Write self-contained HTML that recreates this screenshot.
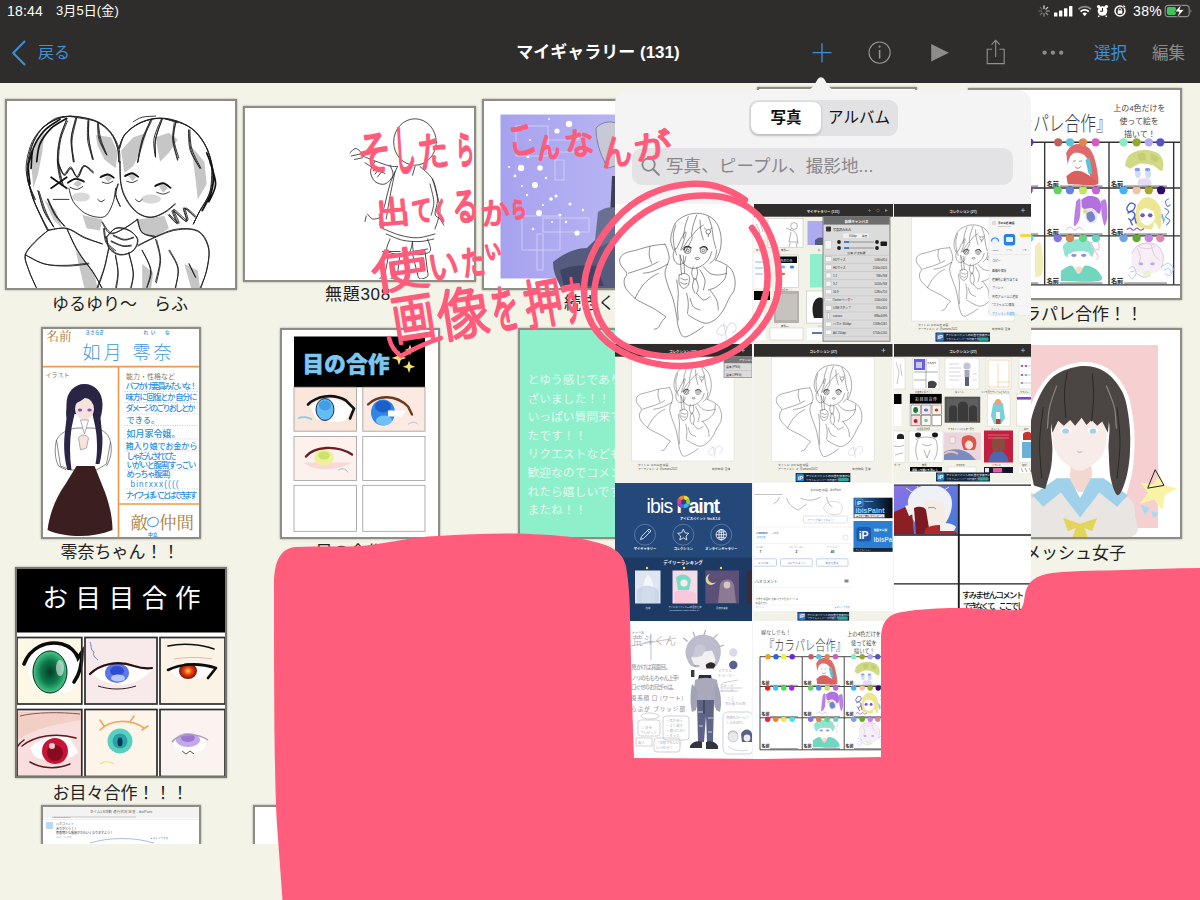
<!DOCTYPE html>
<html lang="ja">
<head>
<meta charset="utf-8">
<title>マイギャラリー</title>
<style>
*{box-sizing:border-box;margin:0;padding:0}
html,body{width:1200px;height:900px;overflow:hidden;background:#f3f3e8;font-family:"Liberation Sans","Noto Sans CJK JP",sans-serif;color:#222}
#app{position:relative;width:1200px;height:900px;overflow:hidden;background:#f3f3e8}
.abs{position:absolute}
/* top bar */
#bar{position:absolute;left:0;top:0;width:1200px;height:82.5px;background:#2e2d2c}
#bar .st{position:absolute;top:2px;color:#fff;font-size:14px;line-height:18px;letter-spacing:.2px}
#bar .nav{position:absolute;top:41px;font-size:16px;line-height:24px}
.blue{color:#3d8fd6}
.gray{color:#8b8b8b}
#title{position:absolute;left:448px;width:300px;top:41px;text-align:center;color:#fff;font-weight:bold;font-size:17px;line-height:24px}
/* thumbs */
.th{position:absolute;background:#fff;border:2px solid #8d8d86;box-shadow:0 0 2px rgba(0,0,0,.35);overflow:hidden}
.th svg{position:absolute;left:0;top:0;display:block}
.lb{position:absolute;font-size:17px;line-height:22px;color:#222;text-align:center;white-space:nowrap}
/* popover */
#pop{position:absolute;left:615px;top:90px;width:416px;height:700px;background:#f4f4f4;border-radius:13px 13px 0 0;overflow:hidden}
#arrow{position:absolute;left:803px;top:75.500px;width:36px;height:15px}
.ph{position:absolute;overflow:hidden;background:#fff}
.ph svg{position:absolute;left:0;top:0;display:block}
.hw{position:absolute;color:#ff5c7c;font-weight:bold;white-space:nowrap;transform-origin:0 50%;font-family:"Liberation Sans","Noto Sans CJK JP",sans-serif}
</style>
</head>
<body>
<div id="app">

<!-- ===== GALLERY THUMBS ===== -->
<div id="gallery">
<!--G1-->
<!-- thumb 1 : ゆるゆり -->
<div class="th" style="left:5px;top:99px;width:232px;height:191px">
<svg width="228" height="187" viewBox="7 101 228 187">
 <path d="M95.6 135.0L111.1 137.2L117.8 152.8L115.6 168.3L104.4 159.4L97.8 146.1ZM121.1 150.6L133.3 137.2L146.7 132.8L142.2 148.3L133.3 166.1L124.4 172.8ZM155.6 137.2L168.9 132.8L177.8 139.4L168.9 152.8L160.0 161.7ZM191.1 146.1L204.4 161.7L206.7 183.9L197.8 199.4L195.6 179.4ZM82.2 215.0L102.2 219.4L100.0 230.6L86.7 228.3ZM137.8 219.4L164.4 216.1L168.9 228.3L155.6 237.2L142.2 232.8ZM31.1 161.7L35.6 143.9L44.4 132.8L42.2 152.8L37.8 175.0L33.3 188.3ZM75.6 250.6L93.3 270.6L97.8 288.3L84.4 288.3ZM142.2 263.9L153.3 272.8L151.1 288.3L142.2 288.3ZM184.4 263.9L197.8 270.6L200.0 288.3L191.1 288.3ZM44.4 199.4L53.3 219.4L62.2 228.3L55.6 210.6ZM73.3 183.9L77.8 180.6L82.2 183.4L77.8 187.2ZM104.4 177.7L108.9 175.4L112.2 178.3L108.4 182.1ZM128.4 176.1L132.9 174.3L136.0 177.2L132.4 181.2ZM158.9 186.1L164.0 184.3L167.8 188.3L163.3 192.8Z" fill="#c6c6c6"/>
 <ellipse cx="81" cy="197" rx="9" ry="4.500" fill="#d9d9d9"/><ellipse cx="151" cy="199" rx="10" ry="4.500" fill="#d9d9d9"/>
 <path d="M34.4 199.4C33.3 196.1 28.9 185.7 27.8 179.4C26.7 173.1 26.9 168 27.8 161.7C28.7 155.4 30.6 147.6 33.3 141.7C36.1 135.7 39.6 130.2 44.4 126.1C49.3 122 56.3 118.7 62.2 117.2C68.1 115.7 74.1 116.5 80 117.2C85.9 118 92.6 119.1 97.8 121.7C103 124.3 107.8 128.3 111.1 132.8C114.4 137.2 116.5 143.5 117.8 148.3C119.1 153.1 118.7 159.4 118.9 161.7M27.8 179.4C28.7 182.8 30.9 192.8 33.3 199.4C35.7 206.1 39.8 214.3 42.2 219.4C44.6 224.6 46.9 228.7 47.8 230.6M37.8 190.6C38.9 193.9 41.9 204.6 44.4 210.6C47 216.5 51.9 223.5 53.3 226.1M47.8 199.4C49.1 202 52.8 210.6 55.6 215C58.3 219.4 63 224.3 64.4 226.1M66.7 119.4C65.6 122.8 61.5 132.4 60 139.4C58.5 146.5 57.4 154.3 57.8 161.7C58.1 169.1 61.5 180.2 62.2 183.9M75.6 118.3C74.8 121.9 71.5 132.2 71.1 139.4C70.7 146.7 73 158 73.3 161.7M88.9 120.6C88.9 123.7 88.1 133 88.9 139.4C89.6 145.9 92.6 156.1 93.3 159.4M97.8 123.9C98.1 126.5 98.5 134.3 100 139.4C101.5 144.6 105.6 152.4 106.7 155M57.8 161.7C58.9 163.9 62.2 173.9 64.4 175C66.7 176.1 68.9 168 71.1 168.3C73.3 168.7 75.6 177.6 77.8 177.2C80 176.9 81.9 166.9 84.4 166.1C87 165.4 91.9 171.7 93.3 172.8M68.9 188.3C69.6 190.6 70.7 197.6 73.3 201.7C75.9 205.7 80.4 210.2 84.4 212.8C88.5 215.4 94.1 216.9 97.8 217.2C101.5 217.6 104.1 217.6 106.7 215C109.3 212.4 111.9 206.1 113.3 201.7C114.8 197.2 115.2 190.6 115.6 188.3M53.3 199.4L68.9 199.4M118.9 148.3C119.8 146.1 121.3 139.1 124.4 135C127.6 130.9 132.6 126.7 137.8 123.9C143 121.1 149.6 118.9 155.6 118.3C161.5 117.8 167.4 118.9 173.3 120.6C179.3 122.2 185.9 124.4 191.1 128.3C196.3 132.2 201.1 138.3 204.4 143.9C207.8 149.4 209.8 155.7 211.1 161.7C212.4 167.6 212.6 173.9 212.2 179.4C211.9 185 210.9 189.8 208.9 195C206.9 200.2 202.6 205.7 200 210.6C197.4 215.4 194.4 221.7 193.3 223.9M151.1 119.4C149.6 122.8 144.4 132.4 142.2 139.4C140 146.5 138.5 158 137.8 161.7M162.2 119.4C161.1 122.8 156.7 133.1 155.6 139.4C154.4 145.7 155.6 154.3 155.6 157.2M175.6 121.7C175.2 124.6 173 133.1 173.3 139.4C173.7 145.7 177 156.1 177.8 159.4M188.9 130.6C189.3 133.9 189.3 144.3 191.1 150.6C193 156.9 198.5 165.4 200 168.3M168.9 215C170.4 216.5 177 224.6 177.8 223.9C178.5 223.1 171.9 210.9 173.3 210.6C174.8 210.2 184.8 222 186.7 221.7C188.5 221.3 183 209.1 184.4 208.3C185.9 207.6 193.7 215.7 195.6 217.2M120 161.7C120.2 165.4 120 177.6 121.1 183.9C122.2 190.2 123.9 194.6 126.7 199.4C129.4 204.3 133.7 209.8 137.8 212.8C141.9 215.7 146.7 217.2 151.1 217.2C155.6 217.2 160.4 215 164.4 212.8C168.5 210.6 173.7 205.4 175.6 203.9M117.8 183.9C117.4 185.7 115.2 191.3 115.6 195C115.9 198.7 119.3 204.3 120 206.1M47.8 230.6C45.7 232.4 39.3 237.6 35.6 241.7C31.9 245.7 26.7 250.2 25.6 255C24.4 259.8 27 265 28.9 270.6C30.7 276.1 35.4 285.4 36.7 288.3M47.8 230.6C50.9 230.2 60.6 227.2 66.7 228.3C72.8 229.4 78.5 234.6 84.4 237.2C90.4 239.8 99.3 242.8 102.2 243.9M66.7 228.3C68.5 232 73.3 243.1 77.8 250.6C82.2 258 89.3 266.5 93.3 272.8C97.4 279.1 100.7 285.7 102.2 288.3M25.6 255C28.7 256.5 37.6 262 44.4 263.9C51.3 265.7 59.3 266.1 66.7 266.1C74.1 266.1 85.2 264.3 88.9 263.9M102.2 221.7C103.7 223.5 107.4 231.7 111.1 232.8C114.8 233.9 120 230.6 124.4 228.3C128.9 226.1 135.6 220.9 137.8 219.4M104.4 228.3C104.8 230.6 104.8 238 106.7 241.7C108.5 245.4 114.1 249.1 115.6 250.6M106.7 237.2C108.1 235.7 111.9 229.4 115.6 228.3C119.3 227.2 125.2 228.7 128.9 230.6C132.6 232.4 137 236.1 137.8 239.4C138.5 242.8 136.3 248 133.3 250.6C130.4 253.1 124.1 255.4 120 255C115.9 254.6 111.1 251.3 108.9 248.3C106.7 245.4 107 239.1 106.7 237.2M113.3 235C115.2 235.7 121.1 239.1 124.4 239.4C127.8 239.8 131.9 237.6 133.3 237.2M111.1 241.7C113 242.4 118.9 245.4 122.2 246.1C125.6 246.9 129.6 246.1 131.1 246.1M115.6 255C115.9 258 117.8 267.2 117.8 272.8C117.8 278.3 115.9 285.7 115.6 288.3M128.9 252.8C129.6 256.1 133 266.9 133.3 272.8C133.7 278.7 131.5 285.7 131.1 288.3M108.9 248.3C108.1 251.7 106.3 261.7 104.4 268.3C102.6 275 98.9 285 97.8 288.3M137.8 246.1C140.7 244.6 149.6 239.8 155.6 237.2C161.5 234.6 167.4 231.9 173.3 230.6C179.3 229.3 186.3 228.7 191.1 229.4C195.9 230.2 199.3 231.5 202.2 235C205.2 238.5 208.1 244.6 208.9 250.6C209.6 256.5 208.1 264.3 206.7 270.6C205.2 276.9 201.1 285.4 200 288.3M137.8 219.4C138.5 221.7 139.3 229.8 142.2 232.8C145.2 235.7 153.3 236.5 155.6 237.2M142.2 250.6C143.7 253.9 150.4 264.3 151.1 270.6C151.9 276.9 147.4 285.4 146.7 288.3M155.6 239.4C156.3 242.8 160 252.4 160 259.4C160 266.5 156.3 278 155.6 281.7M168.9 250.6C170.4 253.5 176.7 262 177.8 268.3C178.9 274.6 175.9 285 175.6 288.3M188.9 263.9L195.6 277.2M68.9 181.7C70 181.1 73.1 178.5 75.6 178.3C78 178.1 82 180.2 83.3 180.6M70 187.2C71.1 187.6 74.6 189.6 76.7 189.4C78.8 189.3 81.7 187 82.7 186.6M101.1 176.1C102.2 175.7 105.7 173.8 107.8 173.9C109.8 174 112.4 176.3 113.3 176.8M102.2 182.1C103.1 182.3 106 183.6 107.8 183.4C109.6 183.3 112 181.6 112.9 181.2M125.6 175C126.7 174.6 130.2 172.6 132.2 172.8C134.3 173 136.9 175.6 137.8 176.1M126.7 181.2C127.6 181.4 130.4 182.7 132.2 182.6C134 182.4 136.5 180.7 137.3 180.3M155.6 185C156.9 184.6 160.9 182.4 163.3 182.8C165.7 183.1 168.9 186.5 170 187.2M156.7 192.3C157.8 192.6 161.2 194.2 163.3 194.1C165.4 194 168.3 192.3 169.3 191.9M97.8 199.4C98.3 199.8 100 201.6 101.1 201.7C102.2 201.7 103.9 200.2 104.4 199.9M135.6 199.4C136.1 199.8 137.8 201.7 138.9 201.7C140 201.7 141.7 199.8 142.2 199.4M133.3 121.7C134.8 120.9 138.5 118.1 142.2 117.2C145.9 116.3 153.3 116.3 155.6 116.1M165.6 119L177.8 122.8M42.2 128.3C44.4 126.7 50.7 120.4 55.6 118.3C60.4 116.3 68.5 116.5 71.1 116.1M33.7 199.7C32.6 196.2 28.6 185.2 27.4 179C26.2 172.7 25.7 168.5 26.5 162.2C27.4 156 29.4 147.4 32.4 141.4C35.4 135.4 39.6 130.2 44.5 126.2C49.5 122.1 56.2 118.8 62.1 117.3C67.9 115.7 73.7 116 79.6 116.9C85.5 117.7 92.2 119.5 97.4 122.3C102.5 125 107.2 128.9 110.6 133.2C113.9 137.5 116.1 143.1 117.4 147.9C118.8 152.6 118.4 159.5 118.7 161.9M27.8 178.4C28.7 181.8 30.8 192.1 33.2 198.9C35.6 205.7 39.7 213.8 42.1 219C44.4 224.1 46.3 228.1 47.2 229.9M38.2 191C39.1 194.3 41.2 205.1 43.8 211.1C46.4 217.1 52.2 224.4 53.8 227M48.1 198.9C49.3 201.5 52.8 210.1 55.6 214.7C58.4 219.2 63.3 224.3 64.8 226.2M67.5 121.1C66.4 124.2 62.1 132.9 60.6 139.9C59.2 147 58.2 155.7 58.7 163.2C59.1 170.7 62.4 181.3 63.2 184.9M76.5 117.8C75.6 121.2 71.7 130.9 71.3 138.2C70.9 145.5 73.8 157.8 74.3 161.7M87.9 120.8C87.8 124 86.9 134 87.7 140.5C88.5 146.9 92 156.3 92.9 159.5M98.3 122.7C98.7 125.4 99.3 133.7 100.8 139.1C102.2 144.4 105.9 152.1 106.9 154.7M57.5 160.1C58.5 162.4 61.4 172.8 63.6 173.9C65.8 175.1 68.6 166.5 70.8 166.9C73 167.4 74.6 177 76.7 176.8C78.9 176.6 81 166.6 83.8 165.8C86.6 164.9 91.8 170.7 93.4 171.7M119 148.5C119.9 146.3 121.2 139.3 124.4 135.2C127.6 131.1 133.1 126.7 138.3 123.9C143.4 121.2 149.6 119.3 155.4 118.7C161.1 118.1 166.8 118.7 172.9 120.3C178.9 122 186.4 124.6 191.7 128.4C196.9 132.2 201.2 137.7 204.4 143.3C207.6 148.9 209.7 155.8 210.9 161.8C212.1 167.9 211.8 174.2 211.5 179.6C211.2 185.1 210.9 189.3 209 194.5C207.1 199.6 202.7 205.7 200.1 210.6C197.5 215.4 194.6 221.5 193.5 223.7M150.9 119.4C149.6 122.9 145.1 133.5 142.9 140.6C140.7 147.7 138.7 158.5 137.9 162.1M162.2 118.8C161.1 122.2 156.7 132.9 155.6 139.2C154.5 145.5 155.5 153.7 155.5 156.7M176.3 120.9C175.8 123.8 173.3 131.8 173.7 138C174.1 144.2 177.9 154.7 178.8 158M188.5 129.9C188.7 133.3 188.3 143.8 190.2 150.2C192.1 156.6 198.2 165.1 199.8 168.1M169.5 214.5C171.1 215.9 178.4 223.9 179.1 223.1C179.8 222.2 172.4 209.7 173.8 209.3C175.2 208.9 185.5 220.7 187.5 220.5C189.5 220.3 184.2 208.8 185.6 208C187 207.3 194.2 214.8 195.9 216.2M35.4 199.5C34.1 196.1 28.9 185.7 27.8 179.4C26.7 173.1 27.7 167.9 28.7 161.6C29.7 155.3 31 147.7 33.7 141.8C36.4 135.9 39.9 130.4 44.9 126.2C49.8 122.1 57.5 118.4 63.3 117C69.2 115.7 74 117.1 79.9 118.1C85.8 119 93.5 120 98.8 122.6C104.1 125.2 108.2 129.4 111.6 133.6C114.9 137.9 117.5 143.4 118.9 148.2C120.3 153 119.6 160 119.8 162.4M27.8 179.3C28.7 182.5 30.8 192.2 33.3 198.9C35.7 205.6 40.1 214 42.6 219.2C45.2 224.4 47.5 228.2 48.5 230M39.1 191.4C40.2 194.7 43.3 205.1 45.7 211C48.1 216.9 52.1 224.2 53.4 226.8M47.4 199.1C48.7 201.8 52.1 210.8 54.9 215.2C57.6 219.6 62.5 223.8 64 225.5M66.2 120.5C65.1 123.7 60.8 132.6 59.4 139.7C57.9 146.7 57.1 155.2 57.4 162.7C57.7 170.3 60.7 181.2 61.3 184.9M76.7 118.2C76 121.9 72.6 133.2 72 140.5C71.5 147.8 73.2 158.3 73.5 161.9M88.4 120.6C88.5 123.6 88.2 132.4 88.8 138.8C89.5 145.2 91.7 155.6 92.3 159M97.7 123.6C97.9 126.1 97.4 133.6 98.8 138.7C100.1 143.7 104.6 151.4 105.8 154M57.6 161.7C58.7 164 61.6 173.9 63.8 175C65.9 176.2 68 168.3 70.3 168.7C72.7 169.1 75.6 177.8 77.8 177.3C80 176.9 81.1 166.6 83.6 165.9C86.1 165.3 91.4 172 92.9 173.2M119.8 148.3C120.6 146 121.8 138.7 124.9 134.6C127.9 130.6 133.1 126.7 138.3 123.9C143.5 121.2 150 119 156 118.4C161.9 117.7 167.8 118.3 173.8 120C179.7 121.7 186.6 124.5 191.7 128.4C196.8 132.3 201.1 138 204.4 143.6C207.7 149.2 210 156 211.5 162C213 167.9 213.6 173.5 213.3 179.1C213 184.6 212.1 190 209.9 195.2C207.7 200.4 203 205.5 200.2 210.3C197.4 215.1 194.5 221.8 193.3 224.1M151.8 120.4C150.3 123.7 145.2 133.2 142.8 140.2C140.4 147.2 138.4 158.8 137.5 162.5M161.7 118.2C160.4 121.5 155.2 132 154.1 138.3C153 144.6 155 153.2 155.2 156.2M174.2 122.7C174 125.7 172.2 134.3 172.7 140.5C173.3 146.7 176.7 156.9 177.5 160.2M189.8 129.7C190.1 133 190.1 142.8 191.9 149.2C193.8 155.6 199.4 164.9 200.9 168.1M168.2 215.1C169.6 216.5 176 223.9 176.7 223.1C177.3 222.4 170.6 210.7 172.2 210.4C173.8 210.1 184.3 221.6 186.2 221.2C188.1 220.8 182.1 208.6 183.5 207.9C184.9 207.1 192.7 215.3 194.6 216.8M119.9 161.6C120 165.2 119.7 177.1 120.7 183.4C121.7 189.8 123.4 194.9 126.2 199.8C128.9 204.7 133.2 209.9 137.3 212.8C141.3 215.7 145.9 217.5 150.3 217.4C154.8 217.3 160.2 214.5 164.2 212.3C168.2 210.1 172.6 205.6 174.3 204.2M118.4 184.2C118 186 115.6 191 115.9 194.7C116.2 198.4 119.6 204.3 120.3 206.3M47.7 230.7C45.6 232.5 38.7 237.4 35 241.5C31.2 245.5 26.2 250.3 25.1 255C24.1 259.7 26.9 264.4 28.7 269.8C30.5 275.1 34.7 284.3 36 287.2M47.3 230.2C50.5 229.9 60.3 227.2 66.4 228.5C72.5 229.7 78 235.1 83.9 237.7C89.9 240.2 99.1 242.8 102.2 243.8M67 229C68.8 232.7 73.2 244.1 77.7 251.4C82.1 258.8 89.6 266.9 93.8 273.2C97.9 279.6 101 286.8 102.5 289.5M25.1 254.8C28.4 256.3 37.6 262.3 44.6 264C51.6 265.8 59.8 265.4 67.1 265.3C74.4 265.1 84.9 263.5 88.4 263.1M102.1 222.6C103.5 224.4 106.6 232.6 110.2 233.6C113.8 234.6 119.1 231 123.6 228.6C128.2 226.2 135.2 220.8 137.5 219.3M103.4 228.7C103.9 231 104.3 238.8 106 242.5C107.8 246.2 112.8 249.5 114.2 250.9M106.2 237.3C107.8 235.8 112.3 229.4 116 228.2C119.8 226.9 125.3 228.1 128.8 230C132.4 231.9 136.7 236.1 137.4 239.6C138 243.1 135.5 248.6 132.7 251C129.9 253.5 124.3 254.9 120.4 254.4C116.5 254 111.6 251 109.4 248.1C107.1 245.3 107.3 239.3 106.9 237.5M113.2 235.7C114.9 236.4 120.4 239.8 123.8 240.1C127.2 240.4 131.9 238.2 133.6 237.8M111.2 240.8C113.1 241.6 119.2 245 122.6 245.7C125.9 246.4 129.8 245.1 131.3 245M115.4 255.8C115.9 258.5 118.1 267.1 118.2 272.5C118.4 277.9 116.7 285.5 116.4 288.1M128.7 253.2C129.5 256.6 132.9 267.3 133.2 273.1C133.5 279 131 285.8 130.6 288.3M108.5 248.8C107.7 252.1 106 261.9 104 268.5C102 275.2 97.9 285.2 96.7 288.6M138.4 245C141.5 243.5 150.7 238.8 156.6 236.2C162.5 233.7 167.9 230.8 173.8 229.6C179.6 228.4 187 228.2 191.8 229C196.6 229.8 199.8 231.2 202.7 234.6C205.6 238.1 208.3 243.7 209 249.4C209.7 255.2 208.1 262.8 206.8 269.2C205.5 275.6 202 284.7 201 287.8M137.1 219.2C137.9 221.4 139.1 229.7 142.1 232.6C145.1 235.4 152.9 235.6 155.1 236.2M142.1 250.1C143.5 253.4 149.7 263.5 150.5 269.7C151.3 275.9 147.5 284.2 146.9 287.2M156.7 240C157.3 243.4 160.7 253.1 160.6 260.3C160.5 267.4 157 279.2 156.3 283M169.7 250.2C171.1 253.2 177.3 261.9 178.2 268.3C179.2 274.6 175.7 285 175.2 288.3M189.2 263.8L195.4 277.2" fill="none" stroke="#1e1e1e" stroke-width=".9" stroke-linecap="round" stroke-linejoin="round"/>
 <path d="M31.1 168.3C31.5 165 31.1 154.6 33.3 148.3C35.6 142 40 135.4 44.4 130.6C48.9 125.7 57.4 121.3 60 119.4M36.7 161.7C37.2 158.7 37.6 149.4 40 143.9C42.4 138.3 46.7 132.6 51.1 128.3C55.6 124.1 64.1 120 66.7 118.3M30 183.9C29.7 180.9 28.1 171.7 28.4 166.1C28.8 160.6 31.6 153.1 32.2 150.6M206.7 152.8C207.8 156.1 212.6 166.1 213.3 172.8C214.1 179.4 213 186.5 211.1 192.8C209.3 199.1 203.7 207.6 202.2 210.6M210 161.7C210.9 165.4 215.7 177.2 215.6 183.9C215.4 190.6 210 198.7 208.9 201.7M51.1 177.2L66.7 188.3M51.1 188.3L66.7 177.2M67.8 182.8C69.1 182.1 72.9 179.2 75.6 179C78.3 178.8 82.6 181.2 84 181.7M100.4 177.2C101.7 176.8 105.6 174.5 107.8 174.6C110 174.6 112.8 177.1 113.8 177.7M124.9 176.1C126.1 175.7 130 173.3 132.2 173.4C134.4 173.6 137.2 176.2 138.2 176.8M155.1 186.1C156.5 185.7 160.7 183.1 163.3 183.4C165.9 183.7 169.4 187.1 170.7 187.9" fill="none" stroke="#111" stroke-width="1.700" stroke-linecap="round"/>
</svg>
</div>
<div class="lb" style="left:20px;top:294px;width:200px">ゆるゆり〜　らふ</div>

<!-- thumb 2 : 無題308 -->
<div class="th" style="left:242.500px;top:106px;width:233.500px;height:175.500px">
<svg width="229" height="171" viewBox="245 109 229 171">
 <g fill="none" stroke="#222" stroke-width=".8" stroke-linecap="round" stroke-linejoin="round">
  <ellipse cx="415" cy="143" rx="21.300" ry="23.200"/>
  <path d="M350 153.8C351 153 354 149.1 356.2 149.5C358.5 149.9 362.5 155.1 363.8 156.2M351.2 157L360 155M354.5 160.5L362.5 158.8M362.5 157C364.6 157.8 370.4 160.3 375 162C379.6 163.7 386.2 166.1 390 167C393.8 167.9 396.2 167.4 397.5 167.5M365 163.8C366.7 164.8 371.7 168.2 375 170C378.3 171.8 383.3 173.8 385 174.5M375 162.5C374.2 164.2 370.5 169.2 370.5 172.5C370.5 175.8 372.6 180.4 375 182.5C377.4 184.6 382 186 385 185C388 184 392.2 179.4 393 176.2C393.8 173.1 390.5 167.9 390 166.2M373 172L376.5 167.5M375 175L379 170M377.5 178L381.5 173M397.5 167.5C396.2 170.4 392.1 178.8 390 185C387.9 191.2 386.7 198.3 385 205C383.3 211.7 380.2 220.8 380 225C379.8 229.2 383.1 229.2 383.8 230M420 167.5C422.1 169.6 429.6 175 432.5 180C435.4 185 436.2 192.1 437.5 197.5C438.8 202.9 440.4 207.1 440 212.5C439.6 217.9 435.8 227.1 435 230M383.8 230C386.5 231 394.4 234.8 400 236.2C405.6 237.7 411.7 239 417.5 238.8C423.3 238.5 432.1 235.6 435 235M386.2 235C389 236 396.9 240 402.5 241.2C408.1 242.5 414.8 242.7 420 242.5C425.2 242.3 431.5 240.4 433.8 240M395 172.5C394.2 176.7 391.5 189.6 390 197.5C388.5 205.4 386.9 216.2 386.2 220M415 167.5L412.5 176.2M432.5 180C433.3 183.3 437.1 194.2 437.5 200C437.9 205.8 434.6 211.7 435 215C435.4 218.3 438.5 218.1 440 220C441.5 221.9 443.1 225.2 443.8 226.2M430 185C430.6 187.9 433.5 197.3 433.8 202.5C434 207.7 431.7 214 431.2 216.2M367.5 215C368.3 215.8 370.4 219.4 372.5 220C374.6 220.6 378.8 219 380 218.8M366.2 217L365 222.5M390 240C389.6 242.1 384.6 250 387.5 252.5C390.4 255 403.3 256.7 407.5 255C411.7 253.3 411.7 244.6 412.5 242.5M412.5 242.5C412.9 244.6 412.1 253.3 415 255C417.9 256.7 427.9 255 430 252.5C432.1 250 427.9 242.1 427.5 240M388.8 255L385 275M400 255L397.5 275M412.5 255L417.5 275M425 252.5L427.5 272.5M382.5 252.5L400 252.5M412.5 252.5L427.5 250M383.8 256.2L400 256.2M385 275C384.2 275.8 379.2 279.1 380 280C380.8 280.9 387.1 281.3 390 280.5C392.9 279.7 396.2 275.9 397.5 275M417.5 275C417.9 275.8 418.3 279.6 420 280C421.7 280.4 426.2 278.8 427.5 277.5C428.8 276.2 427.5 273.3 427.5 272.5"/>
 </g>
</svg>
</div>
<div class="lb" style="left:308px;top:284px;width:100px;letter-spacing:.7px">無題308</div>

<!-- thumb 3 : purple -->
<div class="th" style="left:482px;top:99px;width:233px;height:191px">
<svg width="229" height="187" viewBox="484 101 229 187">
 <defs><linearGradient id="pg" x1="0" x2="1" y1="0" y2="0"><stop offset="0" stop-color="#a7a2ee"/><stop offset="1" stop-color="#c2c0f6"/></linearGradient></defs>
 <rect x="500.500" y="114.500" width="196" height="164" fill="url(#pg)"/>
 <g fill="none" stroke="#d6d4fb" stroke-width=".8">
  <rect x="516" y="126" width="32" height="30"/><rect x="548" y="140" width="34" height="12"/><rect x="555" y="160" width="9" height="20"/>
  <rect x="522" y="216" width="38" height="34"/><rect x="543" y="218" width="46" height="14"/><rect x="537" y="234" width="6" height="36"/>
 </g>
 <g fill="#fff">
  <circle cx="569" cy="124" r="3.2"/><circle cx="557" cy="131" r="2.6"/><circle cx="521" cy="168" r="3.2"/><circle cx="540" cy="168" r="2.8"/><circle cx="535" cy="185" r="3"/><circle cx="539" cy="213" r="3"/><circle cx="577" cy="233" r="2.6"/><circle cx="551" cy="199" r="1.8"/><circle cx="556" cy="196" r="1.6"/><circle cx="570" cy="204" r="1.5"/><circle cx="515" cy="176" r="1.4"/><circle cx="528" cy="157" r="1.3"/><circle cx="549" cy="150" r="1.3"/><circle cx="546" cy="178" r="1.2"/><circle cx="527" cy="195" r="1.2"/><circle cx="560" cy="215" r="1.3"/><circle cx="583" cy="210" r="1.2"/><circle cx="533" cy="229" r="1.2"/><circle cx="566" cy="222" r="1.2"/><circle cx="509" cy="167" r="1.1"/><circle cx="530" cy="140" r="1.1"/><circle cx="578" cy="138" r="1.1"/><circle cx="543" cy="205" r="1.1"/><circle cx="522" cy="186" r="1"/><circle cx="552" cy="222" r="1"/><circle cx="549" cy="119" r="1"/>
 </g>
 <path d="M596 128c6-6 14-8 22-4l4 40-14 4c-6-10-12-24-12-40z" fill="#c7c9d6" stroke="#70738a" stroke-width=".8"/>
 <path d="M612 176h12v40h-14z" fill="#3c4156"/>
 <path d="M553 262c10-8 22-14 34-14 10-10 20-20 34-24v64h-60c-4-8-8-16-8-26z" fill="#555b7c"/>
 <path d="M560 270c10-4 24-6 36-4l8 20h-40z" fill="#3e4463"/>
 <path d="M598 212c6-4 12-6 20-4v30l-24 12z" fill="#6a7092"/>
</svg>
</div>
<div class="lb" style="left:564px;top:293px;width:68px;text-align:left">続きくん</div>

<!-- 4th & 5th thumbs in row 1 -->
<div class="th" style="left:757px;top:87px;width:160px;height:213px"></div>
<!-- カラパレ symbol (138x138 local) -->
<svg width="0" height="0" style="position:absolute">
<defs>
<symbol id="kara" viewBox="0 0 138 138" overflow="visible">
 <rect width="138" height="138" fill="#fff"/>
 <text x="8" y="13" font-size="5" fill="#555">線なしでも！</text>
 <text x="11" y="28.500" font-size="13.500" fill="#3a3a3a" font-weight="300" textLength="82" lengthAdjust="spacingAndGlyphs">『カラパレ合作』</text>
 <g font-size="5.200" fill="#444"><text x="94" y="15">上の4色だけを</text><text x="98" y="23.500">使って絵を</text><text x="101" y="32">描いて！</text></g>
 <g fill="none" stroke="#333" stroke-width=".9">
  <path d="M7 35.700H138M7 65.500H138M7 96.800H138M7 128.800H138M7 35.700V128.800M49.200 35.700V128.800M91.200 35.700V128.800M133.400 35.700V128.800"/>
 </g>
 <!-- characters -->
 <g opacity=".9">
  <path d="M63.2 42.6C63.8 41.8 65.1 39 66.6 38.1C68.1 37.1 70.4 36.8 72.2 36.9C74.1 37.1 76.4 37.9 77.9 39.2C79.4 40.5 80.3 42.4 81.3 44.8C82.2 47.3 83 50.8 83.5 53.9C84 56.9 84.8 62.2 84.1 62.9C83.3 63.5 79.9 60.1 79 57.8C78.1 55.5 79.2 51.7 78.4 49.3C77.7 47 76.1 44.8 74.5 43.7C72.9 42.6 70.4 42.2 68.9 42.6C67.4 43 66.2 44.6 65.5 46C64.7 47.3 64.5 49.7 64.3 50.5Z" fill="#db5a5c"/>
  <path d="M65.7 44.8C66.4 44.5 68.5 43.1 70 43C71.4 43 73.5 43.4 74.5 44.6C75.5 45.8 76.1 48.8 75.8 50.5C75.6 52.1 74 53.7 72.8 54.4C71.6 55.2 70 55.5 68.9 55C67.7 54.4 66.6 51.7 66.1 51Z" fill="#fff"/>
  <path d="M75.8 47.1L78.6 46.0L80.4 56.3L77.9 56.3Z" fill="#3fc3d2"/>
  <path d="M63.4 57.8C64.3 57.2 66.8 54.7 68.9 54.4C70.9 54.1 73.4 54.4 75.8 55.9C78.3 57.3 85.7 61.9 83.7 63.1C81.8 64.3 67.6 63.1 64.3 63.1Z" fill="#d4504f"/>
  <path d="M67.7 48.2L69.4 47.7M71.7 48.2L73.6 47.8M68.9 51.6C69.2 51.8 70.2 52.8 70.9 52.7C71.6 52.7 72.6 51.6 72.9 51.4" fill="none" stroke="#b03a3c" stroke-width=".5"/>
  <path d="M101.6 51C101.9 50 102.5 46.4 103.8 44.8C105.1 43.2 107.2 42.1 109.5 41.4C111.7 40.8 114.9 40.5 117.3 40.9C119.8 41.3 122.6 42.3 124.1 43.7C125.7 45.1 126.4 47.6 126.6 49.3C126.8 51.1 126.6 54.2 125.5 54.4C124.3 54.6 121.9 51.5 119.6 50.7C117.3 49.9 114.1 49.2 111.7 49.6C109.3 49.9 106.3 52.4 105.2 53Z" fill="#cdd578"/>
  <path d="M109.5 43.7C110.2 43.5 113 42 114 42.6C114.9 43.1 115.6 46.2 115.1 47.1C114.6 47.9 111.8 47.6 111.1 47.7ZM118.5 43.1C119.2 43.5 122.4 44.5 123 45.4C123.6 46.3 122.6 48.5 121.9 48.8C121.1 49.1 119 47.4 118.5 47.1Z" fill="#b3bf55" opacity=".6"/>
  <path d="M105.8 52.7C106.8 52.3 109.4 50.5 111.7 50.2C114 50 118 50.2 119.6 51.4C121.2 52.5 121.7 55.5 121.3 57.2C120.9 58.9 119 60.8 117.3 61.5C115.7 62.2 112.8 62.1 111.1 61.5C109.5 60.9 107.9 58.4 107.2 57.8Z" fill="#fff"/>
  <ellipse cx="109.7" cy="53.6" rx="1.8" ry="1.2" fill="#7d96e6"/>
  <ellipse cx="116.4" cy="53.6" rx="1.8" ry="1.2" fill="#7d96e6"/>
  <path d="M107.8 55C108.4 55 111.1 54.3 111.7 55C112.3 55.6 111.7 58.4 111.1 58.9C110.6 59.5 109 58.5 108.6 58.4ZM114.6 55C115.3 55 117.9 54.3 118.5 55C119 55.6 118.6 58.3 118 58.9C117.5 59.6 115.8 58.9 115.3 58.9Z" fill="#bcd2f8" opacity=".8"/>
  <path d="M110.6 59.5C111.7 59.5 116 58.8 117.3 59.5C118.7 60.2 119.8 62.8 118.5 63.4C117.2 64.1 111 63.4 109.5 63.4Z" fill="#d9c8f4" opacity=".7"/>
  <path d="M73.1 73.3C73.9 72.8 76.1 71 77.9 70.8C79.6 70.5 82.4 70.9 83.7 71.9C85.1 72.9 85.8 74.9 86 76.6C86.2 78.4 85.8 81.9 84.9 82.3C83.9 82.7 81.6 79.3 80.1 78.9C78.6 78.5 77 80.2 75.8 80C74.7 79.8 73.8 78.1 73.4 77.8Z" fill="#ab62dc"/>
  <path d="M69.8 74.2C70.2 74 72.1 71.1 72.5 73C72.8 74.9 72.7 82.6 72 85.4C71.3 88.3 68.9 90.9 68.4 90.2C67.9 89.4 68.8 82.5 68.9 80.9ZM85.8 74.2C86.3 74.1 88.4 71.9 89.2 73.6C89.9 75.3 90.2 81.5 90.1 84.3C89.9 87.1 88.9 90.3 88.3 90.2C87.7 90 86.7 84.5 86.4 83.4Z" fill="#b772e2"/>
  <path d="M75.4 79.2C76.2 79.1 78.8 78.2 80.1 78.7C81.5 79.1 83.1 80.6 83.5 82C83.9 83.5 83.6 86.4 82.6 87.5C81.7 88.5 79.1 88.9 77.9 88.4C76.7 87.8 75.8 85 75.4 84.3Z" fill="#e9e0f6"/>
  <path d="M76.5 82C77.1 81.9 79.2 80.4 80.1 80.9C81.1 81.5 82.4 84.3 82.2 85.4C82 86.6 79.9 87.7 79 87.7C78.1 87.7 77.1 85.8 76.7 85.4Z" fill="#3b57ad" opacity=".75"/>
  <path d="M75.4 78.7L76.3 80.0L77.7 80.2L76.5 81.1L76.7 82.5L75.4 81.7L74.2 82.5L74.5 81.1L73.4 80.2L74.7 80.0Z" fill="#c9e36a"/>
  <path d="M63.2 92.8C63.7 92.5 65.1 91 66 91.1C67 91.1 67.9 93.1 68.9 93.1C69.8 93.1 70.7 91.3 71.7 91.3C72.6 91.3 74 92.8 74.5 93.1" fill="none" stroke="#c8a6ea" stroke-width=".6"/>
  <path d="M109.5 76.6C110.2 75.8 112.2 72.6 114 71.9C115.7 71.2 118.1 71.6 119.8 72.6C121.6 73.5 123.4 75.4 124.3 77.5C125.3 79.7 125.5 83 125.5 85.4C125.5 87.9 125.1 92 124.3 92.4C123.6 92.8 121.9 87.9 121 87.9C120 87.9 120.6 92 118.7 92.4C116.8 92.8 111.2 91.7 109.5 90.2C107.7 88.6 108.5 84.3 108.3 83.2Z" fill="#ece488"/>
  <path d="M110.8 80.9C111.5 80.5 113.5 78.7 115.1 78.7C116.7 78.7 119.2 79.6 120.2 80.9C121.1 82.2 121.4 85.1 120.7 86.6C120.1 88.1 117.7 89.8 116.2 89.9C114.7 90.1 112.5 88.1 111.7 87.7Z" fill="#fff"/>
  <ellipse cx="113.1" cy="83.4" rx="1.5" ry="1.4" fill="#6444c6"/>
  <ellipse cx="118.1" cy="83.4" rx="1.5" ry="1.4" fill="#6444c6"/>
  <path d="M102.7 78.7C103.1 78.1 104 75.9 104.9 75.5C105.8 75.1 107.7 75.7 108.1 76.4C108.5 77.1 107.9 79 107.2 79.8C106.5 80.5 104.6 81.1 103.8 80.9C103.1 80.7 102.9 79 102.7 78.7M103.3 82C103.7 81.9 105.3 80.7 106.1 80.9C106.9 81.1 108.1 82.2 108.1 83.2C108.1 84.1 106.8 86.2 106.1 86.6C105.4 86.9 104.2 85.6 103.8 85.4M104.9 86.6L106.6 89.9M107.8 84.3L109 88.8" fill="none" stroke="#3553c4" stroke-width=".9"/>
  <path d="M130.3 72.5C129.9 72.7 128.3 73.3 128.1 74.2C127.9 75 128.6 77.2 129.2 77.5C129.8 77.9 131.1 76.6 131.4 76.4M127.5 78.7C128 79 130.2 80 130.3 80.9C130.4 81.9 128 83.4 128.1 84.3C128.2 85.2 130.8 85.6 130.9 86.6C131 87.5 129 89.4 128.6 89.9M125.8 82.6L126.9 87.7" fill="none" stroke="#5b78d8" stroke-width=".7"/>
  <path d="M125.2 84.3C125.6 84.5 127.3 84.7 127.5 85.4C127.7 86.2 126.6 88.3 126.4 88.8" fill="none" stroke="#6ad0e6" stroke-width=".7"/>
  <path d="M102.7 92.8C103.1 92.6 104.2 91.6 104.9 91.6C105.7 91.7 106.4 93.1 107.2 93.1C108 93.1 108.7 91.6 109.5 91.6C110.2 91.6 111 93 111.7 93.1C112.5 93.2 113.6 92.2 114 92" fill="none" stroke="#7a3fb8" stroke-width=".7"/>
  <path d="M61 103.7C61.5 103.1 62.7 100.9 64.3 100.1C66 99.3 68.8 99 71.1 99C73.4 99 76.4 99.1 78.1 100.1C79.8 101.1 81.1 103.1 81.5 104.8C81.8 106.6 80.9 110.1 80.1 110.5C79.4 110.8 78.1 107.1 77 107.1C75.8 107.1 74.7 110.5 73.4 110.5C72 110.5 70.4 107.1 68.9 107.1C67.4 107.1 65.5 110.1 64.3 110.5C63.2 110.8 62.5 109.5 62.1 109.3Z" fill="#86e2cb"/>
  <path d="M64.3 109.1C65.1 108.8 66.8 107.3 68.9 107.1C70.9 106.8 75.1 106.6 76.7 107.5C78.4 108.4 79.2 110.7 79 112.5C78.9 114.3 77.5 117.2 75.8 118.1C74.2 119.1 70.7 119 68.9 118.4C67 117.7 65.6 114.9 64.9 114.2Z" fill="#fff"/>
  <ellipse cx="68.3" cy="109.5" rx="1.7" ry="1.1" fill="#8b7fe0"/>
  <ellipse cx="74.7" cy="109.5" rx="1.7" ry="1.1" fill="#8b7fe0"/>
  <path d="M59.8 119.5C61 118.9 64.7 115.8 66.6 116.1C68.5 116.4 69.8 121.5 71.3 121.5C72.9 121.5 73.8 116.4 75.8 116.1C77.9 115.8 82.2 117.8 83.7 119.5C85.2 121.2 88.9 125.1 84.9 126.3C80.9 127.4 64 126.3 59.8 126.3Z" fill="#62d2ba"/>
  <path d="M79.2 101.4C79.9 101.2 82.6 99.4 83.5 100.1C84.4 100.8 85.1 105 84.6 105.7C84.2 106.5 81.6 105.3 80.7 104.6C79.8 103.9 79.5 102 79.2 101.4M81.3 105.7C81.7 106.5 84 109.1 84.2 110.2C84.4 111.4 82.7 112.1 82.4 112.5" fill="none" stroke="#f3bcd2" stroke-width=".7"/>
  <path d="M68.9 119.3C69.3 119.6 70.5 121.5 71.3 121.5C72.2 121.5 73.7 120 73.9 119.3C74.2 118.5 73.5 117.4 72.8 117C72.1 116.6 70.5 117 70 117Z" fill="#f6c9b0" opacity=".8"/>
  <path d="M106.1 108.2C106.6 107.4 107.8 104.6 109.5 103.5C111.1 102.3 113.9 101.4 116.2 101.4C118.5 101.4 121.5 102 123.2 103.5C124.9 104.9 126.2 107.8 126.6 110.2C127 112.7 126.8 116.3 125.5 118.1C124.1 120 121.1 121.1 118.5 121.5C115.8 121.9 111.6 121.5 109.5 120.4C107.4 119.3 106.4 115.7 105.8 114.8Z" fill="#f6eef6"/>
  <path d="M106.1 108.2C106.6 107.4 107.8 104.6 109.5 103.5C111.1 102.3 113.9 101.4 116.2 101.4C118.5 101.4 121.5 102 123.2 103.5C124.9 104.9 126.2 107.8 126.6 110.2C127 112.7 125.7 116.8 125.5 118.1M109.5 104.6C109.8 105.5 111.5 108.6 111.7 110.2C111.9 111.9 110.8 114 110.6 114.8M118.5 102.3C118.9 103.5 119.8 107.4 120.7 109.1C121.7 110.8 123.6 111.9 124.1 112.5" fill="none" stroke="#e6b8dc" stroke-width=".6"/>
  <ellipse cx="115.7" cy="103.5" rx="5.200" ry="1.600" fill="none" stroke="#d8c8e8" stroke-width=".6"/>
  <ellipse cx="112.0" cy="115.0" rx="1.5" ry="1.0" fill="#b9a0e6"/>
  <ellipse cx="119.6" cy="115.0" rx="1.5" ry="1.0" fill="#b9a0e6"/>
  <path d="M125.2 117C126 116.6 128.4 114.6 129.8 114.8C131.1 114.9 133 116.8 133.1 118.1C133.3 119.5 131.8 122.1 130.9 122.6C129.9 123.2 128.1 121.7 127.5 121.5M126.9 119.3C127.5 119.1 129.5 117.8 130.3 118.1C131.2 118.5 131.7 121 132 121.5M104.4 118.1C104.9 118 106.4 116.4 107.2 117C108 117.6 109.1 120.2 108.9 121.5C108.7 122.8 106.9 124.8 106.1 124.9C105.3 125 104.4 122.6 104 122.1M109.5 121.5C110.2 121.9 112.5 123.6 114 123.8C115.5 124 117.7 122.8 118.5 122.6M104.9 120.4L107.8 119.8" fill="none" stroke="#a9c0f2" stroke-width=".6"/>
  <path d="M112.8 120.4C113.6 120.3 116.4 119.4 117.3 119.8C118.3 120.3 119 122.5 118.5 123.2C117.9 123.9 114.7 123.9 114 124Z" fill="#e5f0c0" opacity=".8"/>
 </g>
 <!-- dots -->
 <g>
  <circle cx="15" cy="35.700" r="2.700" fill="#f0a020"/><circle cx="23" cy="35.700" r="2.700" fill="#2468e0"/><circle cx="30.700" cy="35.700" r="2.700" fill="#f2f040"/><circle cx="39.200" cy="35.700" r="2.700" fill="#6a24d0"/>
  <circle cx="58" cy="35.700" r="2.700" fill="#c0605e"/><circle cx="65.700" cy="35.700" r="2.700" fill="#5cc2e0"/><circle cx="74.200" cy="35.700" r="2.700" fill="#e08450"/><circle cx="82.500" cy="35.700" r="2.700" fill="#d25cc4"/>
  <circle cx="100.700" cy="35.700" r="2.700" fill="#86ecc4"/><circle cx="109.200" cy="35.700" r="2.700" fill="#96a828"/><circle cx="117.200" cy="35.700" r="2.700" fill="#b4a6f2"/><circle cx="124.700" cy="35.700" r="2.700" fill="#5256c4"/>
  <circle cx="14.700" cy="67" r="2.700" fill="#e02424"/><circle cx="22.700" cy="67" r="2.700" fill="#44c4f0"/><circle cx="30.700" cy="67" r="2.700" fill="#48e048"/><circle cx="38.700" cy="67" r="2.700" fill="#a428e0"/>
  <circle cx="57.700" cy="67" r="2.700" fill="#62d264"/><circle cx="65.700" cy="67" r="2.700" fill="#6484e2"/><circle cx="74.200" cy="67" r="2.700" fill="#c4e264"/><circle cx="82.700" cy="67" r="2.700" fill="#c264d2"/>
  <circle cx="100.700" cy="67" r="2.700" fill="#44b2f0"/><circle cx="109.200" cy="67" r="2.700" fill="#f2c4a4"/><circle cx="117.200" cy="67" r="2.700" fill="#a4aa28"/><circle cx="125.200" cy="67" r="2.700" fill="#32086a"/>
  <circle cx="14.700" cy="98.300" r="2.700" fill="#e02454"/><circle cx="22.700" cy="98.300" r="2.700" fill="#f08424"/><circle cx="30.700" cy="98.300" r="2.700" fill="#eaea44"/><circle cx="39.200" cy="98.300" r="2.700" fill="#44e4e4"/>
  <circle cx="57.700" cy="98.300" r="2.700" fill="#8474e2"/><circle cx="65.700" cy="98.300" r="2.700" fill="#d28454"/><circle cx="74.200" cy="98.300" r="2.700" fill="#64d484"/><circle cx="82.700" cy="98.300" r="2.700" fill="#64d4c4"/>
  <circle cx="100.700" cy="98.300" r="2.700" fill="#74a4e2"/><circle cx="109.200" cy="98.300" r="2.700" fill="#64aa28"/><circle cx="117.200" cy="98.300" r="2.700" fill="#c484e2"/><circle cx="124.700" cy="98.300" r="2.700" fill="#e284a4"/>
 </g>
 <g font-size="4" fill="#222" font-weight="bold">
  <text x="8.500" y="64">名前</text><text x="50.500" y="64">名前</text><text x="92.500" y="64">名前</text>
  <text x="8.500" y="95.300">名前</text><text x="50.500" y="95.300">名前</text><text x="92.500" y="95.300">名前</text>
  <text x="8.500" y="127.300">名前</text><text x="50.500" y="127.300">名前</text><text x="92.500" y="127.300">名前</text>
 </g>
 <path d="M17 64.300h28M59 64.300h28M101 64.300h28M17 95.600h28M59 95.600h28M101 95.600h28M17 127.600h28M59 127.600h28M101 127.600h28" stroke="#333" stroke-width=".5"/>
</symbol>
</defs>
</svg>

<div class="th" style="left:968px;top:88px;width:214px;height:212px">
<svg width="210" height="208" viewBox="0 0 210 208"><use href="#kara" x="-.7" y="-2.400" width="211.400" height="211.400"/><g transform="translate(-.7 -2.400) scale(1.532)"><path d="M42.9 103.5C43.5 103.1 45.5 100.1 46.3 101.2C47.1 102.3 47.8 106.9 48 110.2C48.2 113.6 48.3 119.3 47.4 121.5C46.6 123.8 43.7 123.4 42.9 123.8Z" fill="#ebe9a6" opacity=".8"/></g></svg>
</div>
<div class="lb" style="left:1000px;top:304px;width:150px">カラパレ合作！！</div>

<!-- row 2 -->
<!-- 零奈ちゃん -->
<div class="th" style="left:40.500px;top:327px;width:160px;height:212px">
<svg width="156" height="208" viewBox="42.500 329 156 208">
 <g stroke="#f2994a" stroke-width="1.700" fill="none"><path d="M42 366.700H199M118 366.700V538M118 504H199"/></g>
 <text x="46" y="341" font-size="12.500" fill="#a87a3a" font-family="'Liberation Serif','Noto Serif CJK SC',serif">名前</text>
 <text x="82" y="358.500" font-size="18" fill="#3a9ae2" font-weight="300" textLength="89" lengthAdjust="spacing">如月 零奈</text>
 <text x="85" y="334" font-size="4.600" fill="#3a9ae2" font-weight="bold">きさらぎ</text><text x="143" y="334" font-size="4.600" fill="#3a9ae2" font-weight="bold" textLength="26">れい　な</text>
 <text x="45" y="376.500" font-size="6" fill="#8f7a62">イラスト</text>
 <text x="125.500" y="378.500" font-size="7" fill="#8f7a62">能力・性格など</text>
 <g font-size="8.200" fill="#2a8fe0" font-weight="500">
  <text x="125" y="388.500" textLength="72">バフかけ要員みたいな！</text>
  <text x="125" y="400" textLength="72">味方に回復とか 自分に</text>
  <text x="125" y="411" textLength="70">ダメージのごりおしとか</text>
  <text x="126" y="422.500">できる。</text>
  <text x="126" y="436.500" font-size="9">如月家令嬢。</text>
  <text x="125" y="449" textLength="72">箱入り娘でお金から</text>
  <text x="126" y="458.500" textLength="50">しゃだんされてた</text>
  <text x="126" y="468" textLength="70">いがいと腹黒(すっごい</text>
  <text x="126" y="477" textLength="44">めっちゃ腹黒)</text>
  <text x="130" y="486.500" textLength="48">binrxxx((((</text>
  <text x="125" y="498" textLength="72">ナイフっぽいことはできます</text>
 </g>
 <g stroke="#aaa" stroke-width=".6" stroke-dasharray="1 1.400"><path d="M124 391.500h74M124 402.500h74M124 414h74M124 425.500h74M124 439h74M124 451h74M124 470h74M124 489h74M124 500h74"/></g>
 <text x="130" y="529" font-size="17.500" fill="#a8803e" font-family="'Liberation Serif','Noto Serif CJK SC',serif">敵</text>
 <text x="158.500" y="529" font-size="17.500" fill="#a8803e" font-family="'Liberation Serif','Noto Serif CJK SC',serif">仲間</text>
 <ellipse cx="152.500" cy="522" rx="5.500" ry="4.600" fill="none" stroke="#3a9ae2" stroke-width="1" transform="rotate(-20 152.500 522)"/>
 <text x="147.500" y="536" font-size="4.800" fill="#2a8fe0" font-weight="bold">中立</text>
 <!-- figure -->
 <path d="M56 440c4-8 14-12 22-12h12c10 0 18 4 20 14l-4 22-10 6H70l-10-4z" fill="#fff" stroke="#555" stroke-width=".7"/>
 <path d="M56 440c-2 8-2 18 2 26l8 4M110 442c2 8 0 18-4 24" fill="none" stroke="#555" stroke-width=".7"/>
 <path d="M76 466h18l8 20c6 14 10 30 10 44-10 4-22 6-32 6-12 0-24-2-33-6 2-16 8-32 18-46z" fill="#3b1f20"/>
 <path d="M66 404c0-12 8-20 18-20s18 8 18 20c0 6-1 10-2 14l2 20c0 10-1 18-3 26l-4 0c2-10 2-24 0-36l-3-14H74l-3 14c-2 14-2 28 0 42l-4 0c-3-10-4-22-3-34l2-18c-1-4 0-8 0-14z" fill="#2a2545"/>
 <ellipse cx="84" cy="409" rx="9.500" ry="11" fill="#f6e3dc"/>
 <path d="M72 404c2-10 8-16 14-16 6 0 10 6 10 14-4-2-6-6-8-10-2 6-8 10-16 12z" fill="#2a2545"/>
 <ellipse cx="79.500" cy="410" rx="2.200" ry="1.600" fill="#8a4fc0"/><ellipse cx="89" cy="410" rx="2.200" ry="1.600" fill="#8a4fc0"/>
 <path d="M80 420l4 14 4-14z" fill="#fff" stroke="#666" stroke-width=".5"/>
 <path d="M78 438c2-4 8-4 10 0l-2 10-6 2z" fill="#f6e3dc" stroke="#666" stroke-width=".5"/>
</svg>
</div>
<div class="lb" style="left:50px;top:542px;width:140px">零奈ちゃん！！</div>

<!-- 目の合作 -->
<div class="th" style="left:280px;top:327.500px;width:159.500px;height:211.500px">
<svg width="155.500" height="207.500" viewBox="282 329.500 155.500 207.500">
 <rect x="294" y="336" width="131" height="50.700" fill="#000"/>
 <text x="302.500" y="371" font-size="21.500" fill="#7cc6f2" font-weight="900" stroke="#7cc6f2" stroke-width=".6" stroke-linejoin="round" textLength="87">目の合作</text>
 <g fill="#f7e26a"><path d="M399 350l1.800 5.600 5.600 1.800-5.600 1.800-1.800 5.600-1.800-5.600-5.600-1.800 5.600-1.800z"/><path d="M410 344l1.400 4 4 1.400-4 1.400-1.400 4-1.400-4-4-1.400 4-1.400z"/><path d="M409 360l1.600 4.600 4.600 1.600-4.600 1.600-1.600 4.600-1.600-4.600-4.600-1.600 4.600-1.600z"/></g>
 <rect x="294" y="386.700" width="62.500" height="44" fill="#fbe6dc"/>
 <rect x="362.800" y="386.700" width="62.200" height="44" fill="#fbe9e2"/>
 <rect x="294" y="436" width="62.500" height="44" fill="#fdf1ee"/>
 <g fill="none" stroke="#9c9c9c" stroke-width=".8"><rect x="294" y="386.700" width="62.500" height="44"/><rect x="362.800" y="386.700" width="62.200" height="44"/><rect x="294" y="436" width="62.500" height="44"/><rect x="362.800" y="436" width="62.200" height="44"/><rect x="294" y="484.800" width="62.500" height="46"/><rect x="362.800" y="484.800" width="62.200" height="46"/></g>
 <!-- eye 1 -->
 <path d="M310 406c8-8 22-10 34-4l8 6-6 12c-8 2-20 2-30-2z" fill="#fff"/>
 <ellipse cx="325" cy="409" rx="9" ry="11" fill="#62bdf2"/><ellipse cx="325" cy="405" rx="6" ry="5" fill="#3f9fe6"/><ellipse cx="325" cy="409" rx="9" ry="11" fill="none" stroke="#1a2a4a" stroke-width="1"/>
 <path d="M308 404c8-8 24-12 38-4l8 8-4 10" fill="none" stroke="#111" stroke-width="2.600" stroke-linecap="round"/>
 <path d="M298 418c4-2 10-2 14 1" stroke="#7fd0e8" stroke-width="1.600" fill="none"/>
 <!-- eye 2 -->
 <ellipse cx="383" cy="412" rx="12" ry="13" fill="#2f86e6"/><ellipse cx="383" cy="406" rx="8" ry="6" fill="#1d5fc8"/><ellipse cx="384" cy="420" rx="8" ry="5" fill="#6ec0f6"/>
 <path d="M368 404c10-10 28-10 40 2l4 8" fill="none" stroke="#6a3a1e" stroke-width="2.400" stroke-linecap="round"/>
 <path d="M388 410h18l-4 6h-14z" fill="#fff"/>
 <path d="M408 424c3-3 8-3 10 0" stroke="#b8c4e8" stroke-width="1" fill="none"/>
 <!-- eye 3 -->
 <path d="M304 462c6 8 30 10 48 0" fill="#f8c8c8" opacity=".6"/>
 <ellipse cx="324" cy="457" rx="10" ry="8" fill="#edf29a"/><ellipse cx="324" cy="455" rx="6" ry="4" fill="#d0e070"/>
 <path d="M306 456c8-10 30-12 46-2" fill="none" stroke="#6a1e22" stroke-width="2.400" stroke-linecap="round"/>
 <path d="M338 470c3-3 8-2 10 2" stroke="#b8b8c8" stroke-width="1" fill="none"/>
</svg>
</div>
<div class="lb" style="left:300px;top:542px;width:120px">目の合作✨</div>

<!-- mint -->
<div class="th" style="left:518px;top:327.500px;width:160px;height:211.500px;background:#8eefcb">
<div style="position:absolute;left:7.500px;top:41.500px;font-size:11.700px;line-height:18.600px;color:rgba(255,255,255,.78);white-space:nowrap;letter-spacing:.1px">とゆう感じでありがとうご<br>ざいました！！<br>いっぱい質問来て嬉しかっ<br>たです！！<br>リクエストなども<br>歓迎なのでコメントしてく<br>れたら嬉しいです！！<br>またね！！</div>
</div>

<!-- メッシュ女子 -->
<div class="th" style="left:968px;top:327.500px;width:214px;height:211.500px">
<svg width="210" height="207.500" viewBox="970 329.500 210 207.500">
 <rect x="990" y="344.500" width="168" height="183" fill="#f6cfd1"/>
 <path d="M1030.4 492C1029.4 485.5 1024.9 466.4 1024.7 452.9C1024.4 439.4 1025 423.9 1028.9 410.9C1032.8 398 1040 383.6 1048.1 375.4C1056.3 367.2 1068.4 363.3 1078 361.9C1087.6 360.4 1097.8 362.3 1105.7 366.8C1113.7 371.3 1121 379.9 1125.6 388.9C1130.3 397.9 1132 410.1 1133.5 420.9C1134.9 431.7 1134.8 443.4 1134.2 453.6C1133.6 463.8 1132.4 474.1 1129.9 482C1127.4 490 1127.5 497.2 1119.2 501.2C1110.9 505.3 1092.8 507.1 1080.1 506.2C1067.5 505.4 1049.3 497.9 1043.2 496.3Z" fill="#fff"/>
 <path d="M1030.4 499.1C1034.7 496.7 1048.4 484 1056.7 484.9C1065 485.8 1072.3 504.4 1080.1 504.4C1088 504.4 1095.3 485.8 1103.6 484.9C1111.9 484 1124.7 494.4 1129.9 499.1C1135.1 503.9 1135.2 506.9 1134.9 513.3C1134.5 519.7 1145.2 533.5 1127.8 537.5C1110.4 541.5 1046.6 537.5 1030.4 537.5Z" fill="#e9e5e2"/>
 <path d="M1070.9 461.8C1074 461.8 1086.1 458.5 1089.4 461.8C1092.7 465 1092.3 476.3 1090.8 481.3C1089.3 486.4 1083.7 492 1080.1 492C1076.6 492 1071.2 483.1 1069.5 481.3Z" fill="#f1d9d1"/>
 <path d="M1032.5 494.8L1056.7 477.8L1069.5 477.8L1080.1 497.7L1090.8 477.8L1103.6 477.8L1127.8 494.8L1117.1 506.2L1099.3 492.0L1080.1 516.9L1060.9 492.0L1043.2 506.2Z" fill="#9fd2ea"/>
 <path d="M1063.1 517.6L1080.1 523.3L1097.2 517.6L1092.2 530.4L1084.4 527.6L1088.0 537.5L1072.3 537.5L1075.9 527.6L1068.0 530.4Z" fill="#e3d45c"/>
 <path d="M1053.8 417.3C1053.7 421.5 1052 435.4 1053.1 442.2C1054.2 449 1057 454 1060.2 458.2C1063.5 462.5 1069.4 465.9 1072.7 467.8C1075.9 469.8 1077.4 470 1079.8 470C1082.1 470 1083.6 469.8 1086.9 467.8C1090.1 465.9 1096.1 462.5 1099.3 458.2C1102.6 454 1105.4 449 1106.4 442.2C1107.5 435.4 1105.9 421.5 1105.7 417.3Z" fill="#f7ece7"/>
 <path d="M1033.9 484.9C1033.1 479.6 1029.2 464.7 1028.9 452.9C1028.7 441 1028.9 426.1 1032.5 413.8C1036 401.5 1042.7 386.9 1050.3 378.9C1057.9 371 1069.1 367.6 1078 366.1C1086.9 364.7 1096.3 366.3 1103.6 370.4C1110.9 374.5 1117.8 382.6 1122.1 391C1126.4 399.4 1127.9 410.6 1129.2 420.9C1130.5 431.2 1130.5 443.1 1129.9 452.9C1129.3 462.7 1127.7 472.6 1125.6 479.6C1123.6 486.5 1120.3 495.1 1117.8 494.8C1115.3 494.5 1112.3 485.4 1110.7 477.8C1109.2 470.2 1109.2 459.4 1108.6 449.3C1108 439.3 1111.9 424.4 1107.2 417.3C1102.4 410.2 1089.1 406.7 1080.1 406.7C1071.1 406.7 1057.7 410.2 1053.1 417.3C1048.5 424.4 1052.8 441 1052.4 449.3C1052 457.6 1052.2 460.6 1051 467.1C1049.8 473.6 1046.2 484.9 1045.3 488.4Z" fill="#4b4643"/>
 <path d="M1050.3 417.3L1056.7 388.9L1078.0 376.4L1102.9 388.9L1109.3 417.3L1107.9 432.3L1102.2 420.9L1097.2 425.2L1091.5 419.5L1086.5 424.4L1081.6 417.3L1075.2 425.2L1070.2 419.5L1063.8 425.2L1058.1 420.2L1052.4 432.3Z" fill="#4b4643"/>
 <g fill="none" stroke="#2b2725" stroke-width="1"><path d="M1067.3 371.1C1066.9 374.7 1064.7 384.7 1064.5 392.4C1064.3 400.1 1065.7 413.2 1065.9 417.3M1092.2 372.9C1092.5 376.7 1093.8 388 1093.6 396C1093.5 404 1091.9 416.7 1091.5 420.9M1043.2 406.7C1042.6 412.6 1039.8 430.4 1039.6 442.2C1039.4 454.1 1041.4 471.9 1041.7 477.8M1117.1 406.7C1117.6 412.6 1120 430.4 1120 442.2C1120 454.1 1117.6 471.9 1117.1 477.8"/></g>
 <g fill="none" stroke="#8a8480" stroke-width="1.200"><path d="M1056.7 385.3C1055.5 388.9 1051.1 399.6 1049.6 406.7C1048 413.8 1047.8 424.4 1047.4 428M1106.4 385.3C1107.7 388.9 1112.6 399.6 1114.3 406.7C1115.9 413.8 1116 424.4 1116.4 428"/></g>
 <ellipse cx="1065.6" cy="430.1" rx="5.500" ry="2.800" fill="#fff"/><ellipse cx="1092.9" cy="430.1" rx="5.500" ry="2.800" fill="#fff"/>
 <ellipse cx="1065.6" cy="430.5" rx="3.400" ry="2.600" fill="#a5d0ec"/><ellipse cx="1092.9" cy="430.5" rx="3.400" ry="2.600" fill="#a5d0ec"/>
 <path d="M1077.3 451.1q2.500 1.500 5 0" fill="none" stroke="#c88" stroke-width=".7"/>
 <path d="M1159.8 473.5L1163.3 484.9L1177.6 487.7L1164.8 494.8L1162.6 509.8L1154.1 499.1L1139.9 503.4L1147.7 492.0L1140.6 482.0L1153.4 483.5Z" fill="#f9f3a6"/>
 <path d="M1140.6 504.1L1149.8 507.6L1144.8 514.8ZM1151.2 510.5L1158.4 512.6L1154.1 518.3Z" fill="#a6dcf0"/>
 <path d="M1147.7 487.7L1155.2 469.2L1164.0 484.9Z" fill="none" stroke="#222" stroke-width="1"/>
</svg>
</div>
<div class="lb" style="left:1005px;top:543px;width:140px">メッシュ女子</div>

<!-- row 3 -->
<div class="th" style="left:15px;top:567px;width:211.500px;height:211px;border-color:#77776f">
<svg width="207.500" height="207" viewBox="17 569 207.500 207">
 <rect x="17" y="569" width="208" height="63.500" fill="#000"/>
 <text x="42.500" y="607" font-size="25.500" fill="#fff" font-weight="400" textLength="158" lengthAdjust="spacing">お目目合作</text>
 <rect x="17" y="637.500" width="64.800" height="66.500" fill="#fdf8e6"/>
 <rect x="85" y="637.500" width="72" height="66.500" fill="#f8e9ea"/>
 <rect x="160" y="637.500" width="65" height="66.500" fill="#fbf4e6"/>
 <rect x="17" y="709.500" width="64.800" height="67" fill="#f8dedd"/>
 <rect x="85" y="709.500" width="72" height="67" fill="#fdf4ea"/>
 <rect x="160" y="709.500" width="65" height="67" fill="#fbf3f0"/>
 <defs>
  <radialGradient id="ge"><stop offset="0" stop-color="#063d28"/><stop offset=".55" stop-color="#0f7a4c"/><stop offset="1" stop-color="#49c98a"/></radialGradient>
  <radialGradient id="re"><stop offset="0" stop-color="#f6d040"/><stop offset=".5" stop-color="#e83a12"/><stop offset="1" stop-color="#7a1208"/></radialGradient>
 </defs>
 <!-- c1r1 green eye -->
 <path d="M28 668c2-16 14-26 28-26 14 0 24 10 24 26 0 14-8 26-22 26-16 0-30-10-30-26z" fill="#fff"/>
 <ellipse cx="50" cy="672" rx="17" ry="21" fill="url(#ge)" stroke="#06251a" stroke-width="1"/>
 <ellipse cx="60" cy="668" rx="4" ry="8" fill="#fff" opacity=".55"/>
 <path d="M24 664c6-16 22-24 38-20 8 2 14 8 16 14l4-6c0 10-2 22-8 30" fill="none" stroke="#0a0a0a" stroke-width="3.600" stroke-linecap="round"/>
 <!-- c2r1 blue -->
 <path d="M92 674c10-8 26-12 40-8 8 2 14 4 20 4-6 6-14 12-24 14-14 2-26-2-36-10z" fill="#fff"/>
 <ellipse cx="117" cy="673" rx="12" ry="10" fill="#5a78e8"/><ellipse cx="117" cy="671" rx="7" ry="5" fill="#2f4bd0"/><ellipse cx="118" cy="678" rx="7" ry="3.600" fill="#b8c8fa"/>
 <path d="M90 674c10-10 28-14 44-8 6 2 12 3 18 2" fill="none" stroke="#2a0c10" stroke-width="2.200" stroke-linecap="round"/>
 <path d="M98 686c12 4 26 4 38 0" fill="none" stroke="#3a1c20" stroke-width="1"/>
 <path d="M90 642c2 4 0 8 4 10M94 652c-2 4 2 6 4 8" stroke="#5a78d8" stroke-width=".9" fill="none"/>
 <!-- c3r1 red -->
 <path d="M168 646c14-3 32-2 46 3" fill="none" stroke="#111" stroke-width="1.600" stroke-linecap="round"/>
 <path d="M170 670c10-4 26-6 44-2-6 8-16 12-26 12-8 0-14-4-18-10z" fill="#fff"/>
 <ellipse cx="188" cy="671" rx="9" ry="8" fill="url(#re)"/>
 <path d="M168 670c12-6 30-8 48-2l-8 10" fill="none" stroke="#0c0c0c" stroke-width="2.600" stroke-linecap="round" stroke-linejoin="round"/>
 <path d="M174 659c12-2 26-2 38 0" stroke="#d8a8a0" stroke-width=".8" fill="none"/>
 <!-- c1r2 red big -->
 <path d="M17 712c20 0 44 0 64-2v10c-24 4-46 8-64 20z" fill="#f2cfc4"/>
 <path d="M30 748c8-10 24-14 40-10l8 14c-10 10-30 12-44 4z" fill="#fff"/>
 <circle cx="55" cy="751" r="13" fill="#c81434"/><circle cx="55" cy="753" r="8" fill="#8a0a20"/><circle cx="52" cy="746" r="3" fill="#fff" opacity=".8"/>
 <path d="M22 746c12-10 34-14 54-8M24 740c-3 2-5 4-6 6M30 762c10 6 26 8 40 2" fill="none" stroke="#5a1a20" stroke-width="1.500" stroke-linecap="round"/>
 <path d="M20 716c16-4 40-4 60-2" fill="none" stroke="#7a5a58" stroke-width="1"/>
 <!-- c2r2 teal -->
 <circle cx="120" cy="741" r="12.500" fill="#58d0c0"/><circle cx="120" cy="741" r="7.500" fill="#2aa0a8"/><ellipse cx="120" cy="742" rx="2.500" ry="4.500" fill="#0c3a4a"/>
 <path d="M100 730c10-10 30-12 44-2M104 726l-4-6M130 722l4-6M142 730l6-4" fill="none" stroke="#f0a85a" stroke-width="1.600" stroke-linecap="round"/>
 <path d="M100 764c4-3 10-3 14 0" stroke="#f4d88a" stroke-width="1.200" fill="none"/>
 <!-- c3r2 pale purple -->
 <ellipse cx="190" cy="744" rx="16" ry="9" fill="#fff"/>
 <ellipse cx="188" cy="740" rx="12" ry="7" fill="#c4a8ea"/><ellipse cx="188" cy="738" rx="7" ry="4" fill="#9a78d2"/>
 <path d="M172 742c6-8 24-10 36-2" fill="none" stroke="#a89ab0" stroke-width="1.400"/>
 <path d="M182 751l4 3 4-3 4 3" stroke="#555" stroke-width="1" fill="none"/>
 <g fill="none" stroke="#2c2c2c" stroke-width="1.700"><rect x="17" y="637.500" width="64.800" height="66.500"/><rect x="85" y="637.500" width="72" height="66.500"/><rect x="160" y="637.500" width="65" height="66.500"/><rect x="17" y="709.500" width="64.800" height="67"/><rect x="85" y="709.500" width="72" height="67"/><rect x="160" y="709.500" width="65" height="67"/></g>
</svg>
</div>
<div class="lb" style="left:40.500px;top:782.500px;width:160px">お目々合作！！！</div>

<!-- row 4 (clipped at y=844) -->
<div style="position:absolute;left:0;top:800px;width:1200px;height:44px;overflow:hidden">
 <div class="th" style="left:41px;top:5px;width:159.500px;height:120px">
  <svg width="156" height="40" viewBox="43 807 156 40">
   <rect x="43" y="807" width="156" height="11" fill="#f3f3f3"/>
   <text x="121" y="813.300" font-size="3.600" fill="#666" text-anchor="middle">タイムLS活動 進行状況 狂言 - ibisPaint</text>
   <rect x="52" y="816" width="84" height="2" fill="#dedede"/><text x="53" y="817.700" font-size="1.800" fill="#777">ibispaint.com/art/1234</text>
   <path d="M43 819.500h156" stroke="#ddd" stroke-width=".5"/>
   <rect x="46" y="822" width="7" height="7" fill="#b9d9ee"/>
   <text x="56" y="825" font-size="3" fill="#555">ハオコメント</text>
   <text x="56" y="829.500" font-size="3" fill="#333">ありがとう！！</text>
   <text x="56" y="833.500" font-size="3" fill="#333">思春期かな服装がかわいくなりますよう！</text>
   <text x="56" y="838" font-size="2.600" fill="#999">コメントする</text>
   <path d="M90 843c20-6 44-6 64 0" fill="none" stroke="#5a7ac8" stroke-width=".5"/>
   <text x="150" y="838.500" font-size="2.600" fill="#4a8ad8">▲ストックする</text>
  </svg>
 </div>
 <div class="th" style="left:253px;top:5px;width:233px;height:120px"></div>
</div>
<!--/G1-->
</div>

<!-- ===== TOP BAR ===== -->
<div id="bar">
<!--BAR-->
<div class="st" style="left:7px">18:44</div>
<div class="st" style="left:56px;font-size:13px;letter-spacing:.1px">3月5日(金)</div>
<svg class="abs" style="left:1036px;top:2px" width="160" height="20" viewBox="1036 2 160 20">
 <g stroke-width="1.200" stroke-linecap="round">
  <path d="M1044 5.800v2.700" stroke="#e0e0e0"/><path d="M1047.700 7.300l-1.900 1.900" stroke="#cfcfcf"/><path d="M1049.200 11h-2.700" stroke="#b8b8b8"/><path d="M1047.700 14.700l-1.900-1.900" stroke="#a0a0a0"/><path d="M1044 16.200v-2.700" stroke="#8c8c8c"/><path d="M1040.300 14.700l1.900-1.900" stroke="#7c7c7c"/><path d="M1038.800 11h2.700" stroke="#6e6e6e"/><path d="M1040.300 7.300l1.900 1.900" stroke="#666"/>
 </g>
 <g fill="#fff">
  <rect x="1054" y="12.5" width="3.4" height="4" rx=".6"/><rect x="1059" y="10.5" width="3.4" height="6" rx=".6"/><rect x="1064" y="8.3" width="3.4" height="8.2" rx=".6"/><rect x="1069" y="6" width="3.4" height="10.5" rx=".6"/>
  <path d="M1084.7 16.3l-2.3-2.7a3.4 3.4 0 0 1 4.6 0z"/>
 </g>
 <path d="M1080.6 11.6a5.8 5.8 0 0 1 8.2 0" fill="none" stroke="#fff" stroke-width="1.9"/>
 <path d="M1078.4 9.2a9 9 0 0 1 12.6 0" fill="none" stroke="#8c8c8c" stroke-width="1.9"/>
 <g fill="#fff">
  <circle cx="1102.5" cy="11" r="4.8"/><circle cx="1098.6" cy="6.6" r="1.7"/><circle cx="1106.4" cy="6.6" r="1.7"/><path d="M1098.5 15.2l1.4.8-1 1.3-1.2-.8zM1106.5 15.2l-1.4.8 1 1.3 1.2-.8z"/>
 </g>
 <path d="M1102.5 8v3.3h-2.4" fill="none" stroke="#2e2d2c" stroke-width="1.1"/>
 <circle cx="1120" cy="11" r="5" fill="none" stroke="#fff" stroke-width="1.5"/>
 <path d="M1123 4.6l3 1.8-2.8 2.2z" fill="#fff" stroke="#2e2d2c" stroke-width=".6"/>
 <rect x="1117.7" y="10.2" width="4.6" height="3.6" rx=".6" fill="#fff"/><path d="M1118.6 10.4v-1a1.4 1.4 0 0 1 2.8 0v1" fill="none" stroke="#fff" stroke-width=".9"/>
 <rect x="1165.2" y="5.4" width="24" height="11.2" rx="3.2" fill="none" stroke="#8e8e8e" stroke-width="1.1"/>
 <path d="M1190.5 9.2v3.6c1.2-.3 1.2-3.3 0-3.6z" fill="#8e8e8e"/>
 <rect x="1166.9" y="7.1" width="9.2" height="7.8" rx="1.8" fill="#3fc658"/>
 <path d="M1182 3.200l-7.200 8.700h4.200l-2.600 6.800 7.800-9.200h-4.400z" fill="#fff" stroke="#2e2d2c" stroke-width=".8"/>
</svg>
<div class="st" style="left:1133px;font-size:14px;letter-spacing:.4px">38%</div>
<svg class="abs" style="left:10px;top:38px" width="18" height="30" viewBox="0 0 18 30"><path d="M14.5 3.5L3.2 15l11.3 11.5" fill="none" stroke="#3d8fd6" stroke-width="2.1" stroke-linecap="round" stroke-linejoin="round"/></svg>
<div class="nav blue" style="left:38px">戻る</div>
<div id="title">マイギャラリー (131)</div>
<svg class="abs" style="left:800px;top:36px" width="280" height="34" viewBox="800 36 280 34">
 <path d="M822 43.2v19M812.5 52.7h19" stroke="#3d8fd6" stroke-width="1.3" fill="none"/>
 <circle cx="879.6" cy="52.6" r="10.6" fill="none" stroke="#969696" stroke-width="1.1"/>
 <path d="M879.6 50v8.6" stroke="#969696" stroke-width="1.5"/><circle cx="879.6" cy="46.6" r="1.1" fill="#969696"/>
 <path d="M931.2 44v17.6l17.6-8.8z" fill="#8c8c8c"/>
 <path d="M992 49.2h-4.8v14.4h17v-14.4h-4.8" fill="none" stroke="#909090" stroke-width="1.1"/>
 <path d="M995.7 57v-16M991.6 44.6l4.1-4.2 4.1 4.2" fill="none" stroke="#909090" stroke-width="1.1"/>
 <circle cx="1044.6" cy="52.6" r="2.2" fill="#8a8a8a"/><circle cx="1052.9" cy="52.6" r="2.2" fill="#8a8a8a"/><circle cx="1061.2" cy="52.6" r="2.2" fill="#8a8a8a"/>
</svg>
<div class="nav blue" style="left:1094px;font-size:16.5px">選択</div>
<div class="nav gray" style="left:1152px;font-size:16.5px">編集</div>
<!--/BAR-->
</div>

<!-- ===== POPOVER ===== -->
<svg id="arrow" viewBox="0 0 36 15"><path d="M0 15 C5 15 8.500 13 11.500 8.500 L14.500 3.500 C16.500 .4 19.500 .4 21.500 3.500 L24.500 8.500 C27.500 13 31 15 36 15 Z" fill="#f4f4f4"/></svg>
<div id="pop">
<!--POP-->
<svg width="0" height="0" style="position:absolute">
<defs>
<symbol id="girl" viewBox="0 0 138 138" overflow="visible">
 <path d="M59.3 46C58.9 44.6 57.1 40.4 56.8 37.7C56.6 34.9 56.8 32.5 57.7 29.3C58.5 26.1 59.6 21.4 61.8 18.5C64.1 15.6 67.5 13.4 71 11.8C74.5 10.3 78.8 9.3 82.7 9.3C86.6 9.3 91 10.2 94.3 11.8C97.7 13.5 100.6 16.1 102.7 19.3C104.8 22.5 106.1 27.1 106.8 31C107.5 34.9 107.2 39.3 106.8 42.7C106.4 46 105.2 48.8 104.3 51C103.5 53.2 102.2 55.2 101.8 56M74.3 12.7C73.8 14.3 71.8 19.1 71 22.7C70.2 26.3 69.6 32.4 69.3 34.3M82.7 11C82.1 12.7 80.2 17.5 79.3 21C78.5 24.5 77.1 31 77.7 31.8C78.2 32.7 80.7 27.8 82.7 26C84.6 24.2 88.2 21.8 89.3 21M94.3 12.7C94.9 14.3 96.8 19.1 97.7 22.7C98.5 26.3 98.6 30.7 99.3 34.3C100 37.9 101.4 42.7 101.8 44.3M86 16C86.1 17.7 86.3 22.7 86.8 26C87.4 29.3 88.9 34.3 89.3 36M61.8 21C61.4 22.7 59.6 27.4 59.3 31C59.1 34.6 59.6 39.3 60.2 42.7C60.7 46 62.3 49.6 62.7 51M66 51C66.6 52.4 67.4 57.1 69.3 59.3C71.3 61.6 74.9 63.8 77.7 64.3C80.4 64.9 83.2 64.1 86 62.7C88.8 61.3 92.4 58.5 94.3 56C96.3 53.5 97.1 49.1 97.7 47.7M102.7 46C102.4 47.4 102.1 52.1 101 54.3C99.9 56.6 96.8 58.5 96 59.3M62.7 44.3C63.9 41.8 68.6 31.7 70.2 29.3C71.7 27 72.4 27.4 71.8 30.2C71.3 32.9 67.7 43.4 66.8 46M67.7 46C69.1 43.9 74.3 35.4 76 33.5C77.7 31.6 78.8 32.2 78 34.7C77.2 37.2 72.2 46.2 71 48.5M61.8 44.3C61.4 45.2 59.6 47.4 59.3 49.3C59.1 51.3 59.3 54.2 60.2 56C61 57.8 62.7 59.8 64.3 60.2C66 60.6 68.9 59.8 70.2 58.5C71.4 57.2 71.6 53.6 71.8 52.7M51 40.2C51.4 41.1 52.8 43.6 53.5 46C54.2 48.4 55.2 52 55.2 54.3C55.2 56.7 53.8 59.2 53.5 60.2M51 40.2C48.8 40.4 42.4 40.9 37.7 41.8C32.9 42.8 27.1 44.8 22.7 46C18.2 47.2 13.8 47.9 11 49.3C8.2 50.7 6.7 52.4 6 54.3C5.3 56.3 5.7 58.5 6.8 61C7.9 63.5 12.1 66.8 12.7 69.3C13.2 71.8 10.3 73.5 10.2 76C10 78.5 10 81.3 11.8 84.3C13.6 87.4 18.1 91.8 21 94.3C23.9 96.8 26.3 97.7 29.3 99.3C32.4 101 36 102.4 39.3 104.3C42.7 106.3 47.2 109.6 49.3 111C51.4 112.4 52.1 111.6 51.8 112.7C51.6 113.8 48.9 115.9 47.7 117.7C46.4 119.5 45.6 122.2 44.3 123.5C43.1 124.8 40.9 124.9 40.2 125.2M53.5 60.2C52.2 60.9 48.6 63.1 46 64.3C43.4 65.6 40.4 66.8 37.7 67.7C34.9 68.5 30.7 69.1 29.3 69.3M14.3 69.3C16 68.8 21 67.1 24.3 66C27.7 64.9 31 64.1 34.3 62.7C37.7 61.3 42.7 58.5 44.3 57.7M36 42.7C35.9 44.1 34.9 48.2 35.2 51C35.4 53.8 37.2 57.9 37.7 59.3M21 94.3C22.1 92.4 25.2 86 27.7 82.7C30.2 79.3 33.2 76.6 36 74.3C38.8 72.1 42.9 70.2 44.3 69.3M53.5 60.2C53.1 61.7 50.9 65.6 51 69.3C51.1 73.1 52.9 78.2 54.3 82.7C55.7 87.1 57.9 91 59.3 96C60.7 101 61.8 108.2 62.7 112.7C63.5 117.1 63.2 119.3 64.3 122.7C65.4 126 66.8 131.6 69.3 132.7C71.8 133.8 76 131 79.3 129.3C82.7 127.7 87.7 123.8 89.3 122.7M62.7 76C62.9 78.2 64.2 84.9 64.3 89.3C64.5 93.8 63.5 98.2 63.5 102.7C63.5 107.1 64.2 113.8 64.3 116M79.3 62.7C79.1 63.8 77.4 67.1 77.7 69.3C77.9 71.6 80 76 81 76C82 76 83.2 71.4 83.5 69.3C83.8 67.2 82.8 64.5 82.7 63.5M80.2 74.3C79.9 75.7 78.4 80.2 78.5 82.7C78.6 85.2 80.6 88.2 81 89.3M81.8 74.3C82.2 75.7 84.2 80.2 84.3 82.7C84.5 85.2 82.9 88.2 82.7 89.3M66 51C66.1 52.9 66.6 59.3 66.8 62.7C67.1 66 67.5 69.6 67.7 71M69.3 51.8C69.5 53.6 69.9 59.8 70.2 62.7C70.4 65.6 70.6 68.2 70.7 69.3M65.2 71C66 70.7 68.5 69.1 70.2 69.3C71.8 69.6 74.5 70.7 75.2 72.7C75.9 74.6 75.3 79.1 74.3 81C73.4 82.9 70.9 84.6 69.3 84.3C67.8 84.1 65.9 81.6 65.2 79.3C64.5 77.1 65.2 72.4 65.2 71M66.8 74.3C67.5 74.6 69.9 75.9 71 76C72.1 76.1 73.1 75.3 73.5 75.2M66.8 78.5C67.4 78.8 69.1 80 70.2 80.2C71.2 80.3 72.5 79.5 73 79.3M101.8 56C103.4 56.7 108.4 58.5 111 60.2C113.6 61.8 116 63.4 117.7 66C119.3 68.6 120.6 72.7 121 76C121.4 79.3 121 83.2 120.2 86C119.3 88.8 117.2 90.4 116 92.7C114.8 94.9 113.8 97.1 112.7 99.3C111.6 101.6 111 103.5 109.3 106C107.7 108.5 105.4 112.1 102.7 114.3C99.9 116.6 96 119.1 92.7 119.3C89.3 119.6 85.7 117.4 82.7 116C79.6 114.6 75.7 111.8 74.3 111M112.7 62.7C112.4 64.6 112.7 71 111 74.3C109.3 77.7 105.4 80.7 102.7 82.7C99.9 84.6 95.7 85.4 94.3 86M96 86C97.1 87.7 101.3 92.7 102.7 96C104.1 99.3 104.1 104.3 104.3 106M82.7 89.3C83.8 90.4 87.1 95.4 89.3 96C91.6 96.6 94.9 93.2 96 92.7M76 94.3C76.6 95.7 77.7 100.7 79.3 102.7C81 104.6 84.9 105.4 86 106M89.3 62.7C90.4 63.8 93.5 67.9 96 69.3C98.5 70.7 101.6 71 104.3 71C107.1 71 111.3 69.6 112.7 69.3M86 66C86.8 67.7 90.4 72.7 91 76C91.6 79.3 89.6 84.3 89.3 86M72.7 89.3C72.9 91 74.2 96 74.3 99.3C74.5 102.7 73.6 107.7 73.5 109.3" fill="none" stroke="#444" stroke-width=".6" stroke-linecap="round" stroke-linejoin="round"/>
 <path d="M69.8 46C70 45.5 70.2 43.8 71 43.2C71.8 42.6 73.3 42.2 74.3 42.3C75.4 42.5 76.8 43.7 77.3 44M86 44.3C86.4 44.1 87.5 42.9 88.5 42.7C89.5 42.4 91 42.5 91.8 43C92.7 43.5 93.2 45.2 93.5 45.7" fill="none" stroke="#222" stroke-width="1.100" stroke-linecap="round"/>
 <g fill="none" stroke="#333" stroke-width=".6"><ellipse cx="73.500" cy="46.300" rx="3.300" ry="3.200"/><ellipse cx="89.300" cy="46.300" rx="3.100" ry="3.200"/><circle cx="73.800" cy="46.500" r="1.300"/><circle cx="89.300" cy="46.500" r="1.300"/><path d="M81 54.200c1.500-1 3.300-1 4.600 0-1 1.900-3.600 1.900-4.600 0z"/><circle cx="94.300" cy="27.700" r="2.300"/><path d="M91.800 25.500l-1.500-2M96.500 25.500l1.500-2M94.300 30v3"/></g>
 <path d="M102.7 127.7C103.2 126.8 104.6 123.8 106 122.7C107.4 121.6 109.9 120.4 111 121C112.1 121.6 112.9 124.3 112.7 126C112.4 127.7 110.7 130.3 109.3 131C107.9 131.7 105.4 130.7 104.3 130.2C103.2 129.6 102.9 128.1 102.7 127.7M112.7 124.3C113.2 123.5 114.6 120 116 119.3C117.4 118.6 120 119.1 121 120.2C122 121.3 122.4 124.5 121.8 126C121.3 127.5 118.4 128.8 117.7 129.3M109.3 119.3L112.7 134.3" fill="none" stroke="#c9c9d1" stroke-width=".7"/>
</symbol>

<symbol id="adb" viewBox="0 0 54 9" overflow="visible">
 <rect width="54" height="9" fill="#14273d"/>
 <rect x=".8" y=".8" width="7.400" height="7.400" rx="1.400" fill="#2a7fd6"/>
 <text x="2" y="6.800" font-size="5.600" fill="#fff" font-weight="bold">iP</text>
 <text x="10" y="3.900" font-size="2.800" fill="#fff">アイビスペイントの広告を非表示にしよう</text>
 <text x="10" y="7.400" font-size="2.600" fill="#cfd8e4">プライムメンバーの特典を見る</text>
 <rect x="42.500" y="4.800" width="10" height="3.200" rx=".8" fill="#2aa79a"/>
</symbol>

<symbol id="canvshot" viewBox="0 0 138 138" overflow="visible">
 <rect width="138" height="138" fill="#f3f2e8"/>
 <rect width="138" height="12.700" fill="#2e2d2c"/>
 <text x="69" y="8.600" font-size="3.400" fill="#e8e8e8" text-anchor="middle" font-weight="bold">コレクション (27)</text>
 <path d="M127 6.300h4M129 4.300v4" stroke="#9ac8f0" stroke-width=".7"/>
 <rect x="17.500" y="13.500" width="102.500" height="103.500" fill="#fff" stroke="#d8d8d0" stroke-width=".5"/>
 <use href="#girl" x="18" y="14" width="102" height="102"/>
 <text x="24" y="122" font-size="2.800" fill="#555">タイトル: 手のお絵 線画</text>
 <text x="24" y="126" font-size="2.800" fill="#555">アーティスト: ✔ @amano2022</text>
 <text x="98" y="126" font-size="2.800" fill="#555">制作時間: 全体</text>
</symbol>
</defs>
</svg>

<!-- segmented control -->
<div style="position:absolute;left:134px;top:10px;width:148.500px;height:35.500px;border-radius:9px;background:#e2e2e4"></div>
<div style="position:absolute;left:136px;top:12px;width:70px;height:31.500px;border-radius:7.500px;background:#fff;box-shadow:0 1.500px 3px rgba(0,0,0,.16),0 0 1px rgba(0,0,0,.12)"></div>
<div style="position:absolute;left:136px;top:16px;width:70px;text-align:center;font-size:15.500px;line-height:24px;font-weight:bold;color:#111">写真</div>
<div style="position:absolute;left:206px;top:16px;width:76px;text-align:center;font-size:15.500px;line-height:24px;color:#111">アルバム</div>
<!-- search -->
<div style="position:absolute;left:17px;top:57.500px;width:381px;height:37.500px;border-radius:10px;background:#e3e3e5"></div>
<svg style="position:absolute;left:24.500px;top:66px" width="22" height="22" viewBox="0 0 22 22"><circle cx="8.600" cy="8.600" r="6.200" fill="none" stroke="#87878c" stroke-width="1.800"/><path d="M13.200 13.200l5.600 5.600" stroke="#87878c" stroke-width="2" stroke-linecap="round"/></svg>
<div style="position:absolute;left:51px;top:63px;font-size:17.500px;line-height:26px;color:#87878c;white-space:nowrap;letter-spacing:.1px">写真、ピープル、撮影地...</div>

<!-- photo grid : pop origin (615,90). rows at 204,343.5,483,622.5 ; cols at 614,754,894 -->
<div class="ph" style="left:-1px;top:114px;width:138px;height:138.500px">
 <svg width="138" height="138" viewBox="0 0 138 138"><use href="#girl" x="0" y="0" width="138" height="138"/></svg>
</div>

<div class="ph" style="left:139px;top:114px;width:138.500px;height:138.500px;background:#f3f2e8">
 <svg width="138.500" height="138.500" viewBox="754 204 138.500 138.500">
  <rect x="754" y="204" width="139" height="12.700" fill="#2e2d2c"/>
  <text x="823" y="212.600" font-size="3.400" fill="#e8e8e8" text-anchor="middle" font-weight="bold">マイギャラリー (131)</text>
  <g fill="#8a8a8a"><path d="M868 210.500h3M869.500 209v3" stroke="#8a8a8a" stroke-width=".5"/><circle cx="878" cy="210.500" r="1.400" fill="none" stroke="#8a8a8a" stroke-width=".4"/><path d="M885 209v3l3-1.500z"/></g>
  <rect x="754" y="218" width="10" height="30" fill="#fff"/><path d="M756 224l4 8-2 10M760 222l3 10" stroke="#555" stroke-width=".4" fill="none"/>
  <rect x="768" y="218.300" width="35" height="29.200" fill="#fff" stroke="#aaa" stroke-width=".4"/>
  <g fill="none" stroke="#444" stroke-width=".4"><circle cx="794" cy="226" r="3.400"/><path d="M786 228l5 2M790 230c3 0 6 2 7 6l1 8M791 232l-2 10M789 242h9M790 243l-1 4M796 243l1 4"/></g>
  <rect x="807.500" y="221" width="16" height="24" fill="#aeaaf0"/><path d="M815 240c3-3 6-3 9-2v7h-9z" fill="#555b7c"/>
  <g font-size="2.200" fill="#444"><text x="756" y="251">ゆり</text><text x="781" y="251">無題308</text><text x="818" y="251">続</text></g>
  <rect x="754" y="254" width="10" height="34" fill="#fff"/><path d="M755 262h8M755 268h8M755 274h8" stroke="#5ab0e8" stroke-width=".8"/>
  <rect x="777.500" y="255" width="21" height="32.500" fill="#fff" stroke="#aaa" stroke-width=".4"/><rect x="779" y="256.500" width="18" height="6.500" fill="#000"/><text x="780" y="261.500" font-size="3.200" fill="#7cc6f2" font-weight="bold">目の合作</text>
  <ellipse cx="783" cy="267" rx="2.200" ry="1.500" fill="#62bdf2"/><ellipse cx="792" cy="267" rx="2.200" ry="1.500" fill="#2f86e6"/><ellipse cx="783" cy="274" rx="2.200" ry="1.200" fill="#d86a4a"/>
  <rect x="810" y="254" width="14" height="33.500" fill="#8eefcb"/>
  <text x="779" y="291" font-size="2.200" fill="#444">目の合作！！</text>
  <rect x="754" y="291" width="16" height="9" fill="#000"/><rect x="754" y="300" width="10" height="20" fill="#fff"/>
  <rect x="774" y="291" width="25" height="32" fill="#b4b0ac"/><rect x="776" y="294" width="21" height="26" fill="#c6c2be"/>
  <rect x="806.700" y="291" width="17" height="32" fill="#fff" stroke="#aaa" stroke-width=".4"/><path d="M814 302c2-5 8-6 10-2v18h-10c-2-6-2-12 0-16z" fill="#222"/>
  <g font-size="2.200" fill="#444"><text x="781" y="327">無題306</text><text x="818" y="327">メッ</text></g>
  <rect x="754" y="328" width="12" height="12" fill="#fff"/><rect x="770" y="328" width="33" height="12" fill="#fff" stroke="#bbb" stroke-width=".4"/><rect x="807" y="328" width="16" height="12" fill="#fff"/><path d="M812 333h10" stroke="#2a5a8a" stroke-width="1.600"/>
  <!-- new canvas panel -->
  <rect x="823" y="216.700" width="67" height="124.500" fill="#dbdbdb" stroke="#6c6c6c" stroke-width=".8"/>
  <rect x="823.400" y="217" width="66.200" height="7.600" fill="#6e6e6e"/>
  <text x="856.500" y="222.600" font-size="3.400" fill="#fff" text-anchor="middle" font-weight="bold">新規キャンバス</text>
  <rect x="826" y="226.500" width="5" height="5" rx=".8" fill="#333"/><text x="833" y="230.600" font-size="3" fill="#333">写真読み込み</text>
  <rect x="843" y="233.500" width="26" height="4.600" rx="1" fill="#efefef"/><text x="849" y="237" font-size="2.600" fill="#444">600dpi</text><text x="862" y="237" font-size="2.600" fill="#444">等倍</text>
  <rect x="825" y="240.500" width="6.500" height="8.500" fill="#f4f4f4" stroke="#aaa" stroke-width=".3"/>
  <g fill="#1c1c1c"><circle cx="839" cy="242" r="1.900"/><circle cx="839" cy="248" r="1.900"/><circle cx="877" cy="242" r="1.900"/><circle cx="877" cy="248" r="1.900"/><rect x="880.500" y="241.500" width="6.500" height="4.600" rx=".8"/></g>
  <path d="M844 242h30M844 248h30" stroke="#aaa" stroke-width="1.300"/><path d="M844 242h5M844 248h5" stroke="#2a6ac8" stroke-width="1.300"/>
  <text x="856.500" y="254.200" font-size="2.800" fill="#333" text-anchor="middle">比率 ⇄ 反転更</text>
  <g stroke="#bcbcbc" stroke-width=".5"><path d="M823.500 255.300h66M823.500 263.400h66M823.500 271.500h66M823.500 279.600h66M823.500 287.700h66M823.500 295.800h66M823.500 303.900h66M823.500 312h66M823.500 320.100h66M823.500 328.200h66M823.500 336.300h66"/></g>
  <g fill="#f6f6f6" stroke="#999" stroke-width=".3"><rect x="825.300" y="256.800" width="6.400" height="5"/><rect x="825.300" y="264.900" width="6.400" height="5"/><rect x="826" y="273" width="5" height="5"/><rect x="826" y="281.100" width="5" height="5"/><rect x="825.300" y="289.500" width="6.400" height="4.400"/><rect x="824.800" y="298.300" width="7.400" height="2.600"/><rect x="825.300" y="305.400" width="6.400" height="5"/><rect x="827.800" y="312.800" width="1.400" height="6.500"/><rect x="825.300" y="322" width="6.400" height="4.400"/><rect x="825.300" y="330" width="6.400" height="4.400"/></g>
  <g font-size="2.900" fill="#333">
   <text x="833" y="260.600">SDサイズ</text><text x="833" y="268.700">HDサイズ</text><text x="833" y="276.800">1:1</text><text x="833" y="284.900">3:2</text><text x="833" y="293">16:9</text><text x="833" y="301.100">Twitterヘッダー</text><text x="833" y="309.200">LINEスタンプ</text><text x="833" y="317.300">canvas</text><text x="833" y="325.400">ハガキ 300dpi</text><text x="833" y="333.500">A4 150dpi</text>
  </g>
  <g font-size="2.900" fill="#333" text-anchor="end">
   <text x="887" y="260.600">1080x810</text><text x="887" y="268.700">2160x1620</text><text x="887" y="276.800">768x768</text><text x="887" y="284.900">1024x768</text><text x="887" y="293">1280x720</text><text x="887" y="301.100">1500x500</text><text x="887" y="309.200">370x320</text><text x="887" y="317.300">886x4096</text><text x="887" y="325.400">1748x1181</text><text x="887" y="333.500">1754x1240</text>
  </g>
 </svg>
</div>

<div class="ph" style="left:279px;top:114px;width:138px;height:138.500px">
 <svg width="138" height="138.500" viewBox="0 0 138 138.500">
  <use href="#canvshot" x="0" y="0" width="138" height="138"/>
  <rect x="0" y="137" width="138" height="2" fill="#f3f2e8"/>
  <use href="#adb" x="41.500" y="128.500" width="54.500" height="9.200"/>
  <rect x="95" y="14" width="44" height="97.500" rx="2" fill="#f6f6f6" stroke="#e2e2e2" stroke-width=".5"/>
  <rect x="98" y="17" width="4" height="4" fill="#ddd"/><text x="104" y="19.600" font-size="2.600" fill="#222" font-weight="bold">手のお絵 線画</text><text x="104" y="23" font-size="2.200" fill="#888">ibispaint.com</text>
  <circle cx="101" cy="36" r="4.200" fill="#eaf2fb"/><path d="M97.500 37.500a3.500 3.500 0 0 1 7 0" fill="none" stroke="#2a8cf0" stroke-width="1.200"/>
  <rect x="109.800" y="30" width="11.400" height="11.400" rx="2.600" fill="#2b80e4"/><rect x="112" y="33" width="7" height="5" rx=".8" fill="#dff0ff"/>
  <rect x="126" y="30" width="11" height="3" rx="1" fill="#f6d54a"/>
  <g font-size="2.200" fill="#666"><text x="97" y="46.500">AirDrop</text><text x="112" y="46.500">メール</text><text x="128" y="46.500">メモ</text></g>
  <path d="M97 50.500h41M97 102h41" stroke="#e2e2e2" stroke-width=".5"/>
  <g font-size="2.900" fill="#333"><text x="98" y="57.800">コピー</text><text x="98" y="67.800">画像を保存</text><text x="98" y="76.500">連絡先に割り当てる</text><text x="98" y="85">プリント</text><text x="98" y="93.500">共有アルバムに追加</text><text x="98" y="102">"ファイル"に保存</text></g>
  <text x="98" y="110.800" font-size="2.900" fill="#3a8fe8">アクションを編集...</text>
 </svg>
</div>

<!-- row 2 -->
<div class="ph" style="left:-1px;top:253.500px;width:138px;height:138.500px">
 <svg width="138" height="138.500" viewBox="0 0 138 138.500">
  <use href="#canvshot" x="0" y="0" width="138" height="138"/>
  <rect x="0" y="137" width="138" height="2" fill="#f3f2e8"/>
  <rect x="110" y="12.700" width="28" height="21" fill="#dcdcdc" stroke="#777" stroke-width=".6"/>
  <rect x="110" y="12.700" width="28" height="6.500" fill="#777"/>
  <text x="125" y="17.300" font-size="2.800" fill="#fff">アクション</text>
  <path d="M110 26.500h28" stroke="#aaa" stroke-width=".4"/>
  <text x="112" y="24.300" font-size="2.800" fill="#333">画像 (PNG)</text><text x="112" y="31.600" font-size="2.800" fill="#333">画像 (JPEG)</text>
 </svg>
</div>
<div class="ph" style="left:139px;top:253.500px;width:138.500px;height:138.500px">
 <svg width="138.500" height="138.500" viewBox="0 0 138 138"><use href="#canvshot" x="0" y="0" width="138" height="138"/><use href="#adb" x="41.500" y="128.500" width="54.500" height="9.200"/></svg>
</div>
<div class="ph" style="left:279px;top:253.500px;width:138px;height:138.500px;background:#f3f2e8">
 <svg width="138" height="138.500" viewBox="894 344 138 138.500">
  <rect x="894" y="344" width="138" height="12.700" fill="#2e2d2c"/>
  <text x="963" y="352.600" font-size="3.400" fill="#e8e8e8" text-anchor="middle" font-weight="bold">コレクション (27)</text>
  <path d="M1021 350.300h4M1023 348.300v4" stroke="#9ac8f0" stroke-width=".7"/>
  <!-- row a -->
  <g fill="#fff" stroke="#c8c8c0" stroke-width=".4"><rect x="893" y="358" width="12" height="31"/><rect x="913" y="358" width="26" height="31"/><rect x="945" y="358" width="34" height="31"/><rect x="986" y="358" width="25" height="31"/><rect x="1019" y="358" width="14" height="31"/></g>
  <path d="M896 362l3 10-2 12M900 364l2 12" stroke="#777" stroke-width=".4" fill="none"/>
  <rect x="914" y="359" width="11" height="11" fill="#6a60d8"/><path d="M916 362h6v6h-6z" fill="#c8c8e8"/><path d="M914 372h24M926 359v29M914 380h12" stroke="#333" stroke-width=".4"/><path d="M928 382c3-2 7-2 9 2l-2 4h-7z" fill="#444"/><text x="927" y="364" font-size="2.400" fill="#333">すみませ</text>
  <circle cx="967" cy="366" r="3.600" fill="#c4c4d2"/><rect x="964.500" y="370" width="5" height="7" fill="#a8a8b8"/><rect x="965" y="377" width="4" height="9" fill="#5a6080"/><path d="M949 364h10M949 368h12M949 372h11M949 376h12M949 380h10M973 374h4M973 380h4" stroke="#aab" stroke-width=".5"/>
  <rect x="988" y="360" width="21" height="27" fill="none" stroke="#f2a86a" stroke-width=".5"/><path d="M998 364v23M998 382h11" stroke="#f2a86a" stroke-width=".5"/>
  <g><circle cx="1022" cy="366" r="1" fill="#a030d0"/><circle cx="1026" cy="366" r="1" fill="#e03060"/><circle cx="1022" cy="375" r="1" fill="#8040e0"/><circle cx="1026" cy="375" r="1" fill="#40c0e0"/><circle cx="1022" cy="383" r="1" fill="#e06090"/><path d="M1020 366h12M1020 375h12M1020 383h12" stroke="#555" stroke-width=".3"/></g>
  <g font-size="2.200" fill="#444"><text x="915" y="393">お友達を探そう！</text><text x="955" y="393">荒斗くん</text><text x="981" y="393">キャラ募集テンプレどなたも</text><text x="1020" y="393">カラパレ</text></g>
  <!-- row b -->
  <rect x="893" y="394" width="8.500" height="32" fill="#fff"/><rect x="893" y="394" width="8.500" height="10" fill="#000"/>
  <rect x="910" y="394" width="31.700" height="32" fill="#fff" stroke="#999" stroke-width=".4"/><rect x="910" y="394" width="31.700" height="9.600" fill="#000"/><text x="926" y="401" font-size="4" fill="#fff" text-anchor="middle" textLength="22">お目目合作</text>
  <g stroke="#333" stroke-width=".4"><rect x="911" y="405" width="9.500" height="9.800" fill="#fdf8e6"/><rect x="921.500" y="405" width="9.500" height="9.800" fill="#f8e9ea"/><rect x="932" y="405" width="9.200" height="9.800" fill="#fbf4e6"/><rect x="911" y="415.800" width="9.500" height="9.800" fill="#f8dedd"/><rect x="921.500" y="415.800" width="9.500" height="9.800" fill="#fdf4ea"/><rect x="932" y="415.800" width="9.200" height="9.800" fill="#fff"/></g>
  <ellipse cx="915.600" cy="410" rx="2.400" ry="2.900" fill="#0f7a4c"/><ellipse cx="926" cy="410" rx="2.200" ry="1.600" fill="#5a78e8"/><ellipse cx="936.500" cy="410" rx="1.800" ry="1.500" fill="#e83a12"/><circle cx="915.600" cy="421" r="2" fill="#c81434"/><circle cx="926" cy="420.500" r="1.800" fill="#58d0c0"/>
  <rect x="944.700" y="396.700" width="35.500" height="26" fill="#4f4f4f"/><rect x="946.500" y="398.500" width="32" height="22.500" fill="#5e5e5e"/>
  <g fill="#3a3a3a"><path d="M949 421v-12c0-5 8-5 8 0v12zM958 421v-15c0-6 10-6 10 0v15zM969 421v-12c0-5 8-5 8 0v12z"/></g>
  <rect x="987.500" y="394" width="22.500" height="32" fill="#fff" stroke="#c8c8c0" stroke-width=".4"/><path d="M993 404c2-4 8-4 10 0l2 14-4 6h-7l-3-8z" fill="#7ad0d8"/><circle cx="998" cy="402" r="3" fill="#f0a070"/><rect x="996" y="412" width="4" height="10" fill="#fff"/><rect x="996" y="419" width="4.500" height="5" fill="#b04030"/>
  <rect x="1016.700" y="394" width="16" height="32" fill="#fff" stroke="#c8c8c0" stroke-width=".4"/><rect x="1017" y="397" width="15" height="2.600" fill="#8a3ae0"/>
  <g font-size="2.200" fill="#444"><text x="917" y="429.500">お目目合作募</text><text x="948" y="429.500">クラスメイトさん達ー募集</text><text x="991" y="429.500">湊斗くん…</text><text x="1024" y="429.500">終わ</text></g>
  <!-- row c -->
  <rect x="893" y="431" width="12" height="31.500" fill="#fff" stroke="#c8c8c0" stroke-width=".4"/><path d="M897 436c1-3 6-3 7 0v3h-7z" fill="#222"/><path d="M894 446c3 1 7 1 10-1M895 455c3-1 6-2 8-2" stroke="#889" stroke-width=".6" fill="none"/>
  <rect x="909" y="431" width="34" height="31.500" fill="#fff" stroke="#c8c8c0" stroke-width=".4"/><ellipse cx="918" cy="435" rx="3" ry="2.400" fill="#1a1a1a"/><ellipse cx="935" cy="435" rx="3" ry="2.400" fill="#1a1a1a"/><path d="M916 440c4-4 16-4 20 0 2 6 2 14-2 20M918 440c-3 6-3 14 0 20M922 444c3 2 7 2 10 0M924 450l3 8 3-8" stroke="#444" stroke-width=".4" fill="none"/>
  <rect x="944" y="432.500" width="37" height="27.500" fill="#ead6dc"/><path d="M944 452c8-4 18-4 26 2l6 6h-32z" fill="#7a8cc0"/><path d="M962 438c3-4 12-4 14 2 1 4 0 8-2 10h-10c-2-4-3-8-2-12z" fill="#d8584e"/><ellipse cx="969" cy="445" rx="4" ry="4.400" fill="#f8e2da"/><rect x="950" y="437" width="5" height="6" fill="#f4f4f4" stroke="#d88" stroke-width=".4"/><path d="M944 454c4-3 10-3 14 0" stroke="#f0c0b0" stroke-width="2" fill="none"/>
  <rect x="984" y="430.500" width="29" height="32" fill="#c21f3e"/><path d="M988 462c2-8 6-12 10-12s9 4 11 12z" fill="#4a6ab0"/><path d="M992 440c2-5 11-5 13 0 1 5 0 10-2 12h-9c-2-3-3-8-2-12z" fill="#8a4a3e"/><path d="M988 435h21M988 438h21" stroke="#e8a0a8" stroke-width=".6"/>
  <rect x="1019" y="431" width="14" height="31.500" fill="#fff" stroke="#c8c8c0" stroke-width=".4"/><path d="M1023 434c2-3 8-3 9 1v5h-9z" fill="#c8342a"/><path d="M1022 442h10v16h-10z" fill="#6ab0d8"/>
  <g font-size="2.200" fill="#444"><text x="894" y="466">ボック</text><text x="922" y="466">無題</text><text x="956" y="466">ほのぼの</text><text x="992" y="466">メサビス</text><text x="1022" y="466">完成</text></g>
  <!-- row d -->
  <rect x="910" y="467" width="32" height="6" fill="#fff"/><rect x="910" y="467" width="32" height="4.400" fill="#000"/><text x="912" y="470.500" font-size="2.600" fill="#fff" font-weight="bold">頑張って描いて頂こう</text>
  <rect x="948" y="467" width="28" height="6" fill="#fff" stroke="#c8c8c0" stroke-width=".4"/>
  <rect x="984" y="467" width="29" height="6" fill="#181830"/><rect x="993" y="468" width="9" height="4.500" fill="#e85a9a"/><rect x="985" y="468" width="4" height="4.500" fill="#e8e8f8"/><rect x="1005" y="468" width="6" height="4.500" fill="#101020"/>
  <rect x="1019" y="467" width="14" height="6" fill="#fff"/><path d="M1021 468l2 4M1025 468l2 4M1029 468l2 4" stroke="#555" stroke-width=".5"/>
  <use href="#adb" x="936" y="472.500" width="54" height="9"/>
 </svg>
</div>

<!-- row 3 -->
<div class="ph" style="left:-1px;top:393px;width:138px;height:138px;background:#24487a">
 <svg width="138" height="138" viewBox="614 483 138 138">
  <rect x="614" y="557.700" width="138" height="64" fill="#1c3a63"/>
  <text x="646.500" y="513" font-size="19.500" fill="#fff" font-weight="300" letter-spacing="-.8">ibis</text>
  <text x="676.500" y="513" font-size="19.500" fill="#fff" font-weight="bold" letter-spacing="-.6" textLength="43">Paint</text>
  <g transform="translate(683.700 501.800)">
   <circle r="6.800" fill="#24487a"/>
   <path d="M0-6.400A6.400 6.400 0 0 1 5.540-3.200L0 0z" fill="#f6d23a"/><path d="M5.540-3.200A6.400 6.400 0 0 1 5.540 3.200L0 0z" fill="#8ed23a"/><path d="M5.540 3.200A6.400 6.400 0 0 1 0 6.400L0 0z" fill="#2fb8e8"/><path d="M0 6.400A6.400 6.400 0 0 1-5.540 3.200L0 0z" fill="#5a5ae8"/><path d="M-5.540 3.200A6.400 6.400 0 0 1-5.540-3.200L0 0z" fill="#e83a9a"/><path d="M-5.540-3.200A6.400 6.400 0 0 1 0-6.400L0 0z" fill="#f2822a"/>
   <circle r="2.600" fill="#24487a"/>
  </g>
  <text x="680" y="519.600" font-size="3.300" fill="#fff" font-weight="bold">アイビスペイント Ver.8.1.0</text>
  <g fill="none" stroke="#5d7da8" stroke-width=".9"><circle cx="645" cy="534.700" r="10.500"/><circle cx="683.300" cy="534.700" r="10.500"/><circle cx="721.300" cy="534.700" r="10.500"/></g>
  <g fill="none" stroke="#fff" stroke-width=".8" stroke-linejoin="round"><path d="M640.500 539.500l1-3 7.500-7.500 2 2-7.500 7.500zM647.500 530.500l2 2"/><path d="M683.300 529.200l1.700 3.600 3.900.5-2.900 2.700.8 3.900-3.500-2-3.500 2 .8-3.900-2.900-2.700 3.900-.5z"/><circle cx="721.300" cy="534.700" r="5.200"/><path d="M716.100 534.700h10.400M721.300 529.500v10.400M717.300 531.500c2.600 1 5.400 1 8 0M717.300 538c2.600-1 5.400-1 8 0"/><ellipse cx="721.300" cy="534.700" rx="2.400" ry="5.200"/></g>
  <g font-size="3.200" fill="#fff" font-weight="bold" text-anchor="middle"><text x="645" y="550.300">マイギャラリー</text><text x="683.300" y="550.300">コレクション</text><text x="721.300" y="550.300">オンラインギャラリー</text></g>
  <text x="683" y="563.800" font-size="4.400" fill="#fff" font-weight="bold" text-anchor="middle">デイリーランキング</text>
  <g fill="#f2d84a"><circle cx="647" cy="568" r="1.200"/><circle cx="684" cy="568" r="1.200"/><circle cx="721" cy="568" r="1.200"/></g>
  <rect x="635" y="570.500" width="25.500" height="33" fill="#dfe6f2"/><path d="M642 603c0-14 2-26 6-28 4 2 7 14 7 28z" fill="#f4f6fb"/><path d="M637 590c4-6 18-6 22 2v11h-22z" fill="#c2d0e6" opacity=".7"/>
  <rect x="672.500" y="570.500" width="25" height="33" fill="#f6dce6"/><path d="M676 578c3-5 12-5 15 2l-2 10h-11z" fill="#7adcc8"/><path d="M674 592c6-3 16-3 22 2v9h-22z" fill="#f8c8dc"/><circle cx="684" cy="583" r="3.600" fill="#fbeee8"/>
  <rect x="705.300" y="570.500" width="33.700" height="33" fill="#5c4f78"/><path d="M710 574a5.500 5.500 0 1 0 6 8 4.500 4.500 0 0 1-6-8z" fill="#e8d49a"/><path d="M720 584c3-6 12-6 14 1l2 18h-18z" fill="#8a7a94"/><circle cx="727" cy="585" r="3.400" fill="#d8c4c4"/>
  <rect x="746.700" y="570.500" width="6" height="33" fill="#3a2c3c"/>
  <g font-size="2.400" fill="#dbe4f0" text-anchor="middle"><text x="648" y="608.500">花嫁</text><text x="685" y="607.500">アイビスペイント80日目まとめ</text><text x="685" y="610.500">Celebration White(Pastel C...</text><text x="722" y="608.500">月夜の魔女</text></g>
 </svg>
</div>

<div class="ph" style="left:138.500px;top:393px;width:139px;height:138px">
 <svg width="139" height="138" viewBox="753.500 483 139 138">
  <text x="825" y="490.500" font-size="2.800" fill="#555" text-anchor="middle">手のお絵 線画 - ibisPaint</text>
  <path d="M754 494.500h28" stroke="#999" stroke-width=".6"/>
  <g fill="none" stroke="#777" stroke-width=".5"><path d="M773 504l4-3 2-4M786 498c2 6 6 10 12 12l8-6M800 498c6 3 14 3 20-1M826 497c1 4 2 8 6 10"/><path d="M823 508c2-6 8-8 14-6 6 2 6 8 2 12-6 2-14 0-16-6z" stroke="#bbb"/></g>
  <rect x="803" y="516" width="44" height="7" rx="1.500" fill="#fff" stroke="#c4d4e4" stroke-width=".6"/><text x="807" y="521" font-size="2.600" fill="#9ab">アプリで開いてみよう</text>
  <path d="M754 527h97" stroke="#e2e2e2" stroke-width=".5"/>
  <text x="755" y="533.500" font-size="2.800" fill="#2a6ab8" font-weight="bold">✔amano</text><text x="772" y="533.500" font-size="2.400" fill="#999">2日前</text><text x="755" y="537.500" font-size="2.200" fill="#4a8ad8">#手のお絵</text>
  <circle cx="845" cy="537.500" r="2.600" fill="none" stroke="#c8c8c8" stroke-width=".5"/>
  <path d="M754 543.500h97" stroke="#e6e6e6" stroke-width=".5"/>
  <g font-size="2.400" fill="#999" text-anchor="middle"><text x="760" y="548">いいね！</text><text x="796" y="548">コレクション</text><text x="832" y="548">ページビュー</text></g>
  <g font-size="3.200" fill="#333" text-anchor="middle" font-weight="bold"><text x="760" y="552.500">7</text><text x="796" y="552.500">2</text><text x="832" y="552.500">49</text></g>
  <g fill="#fff" stroke="#a8c0dc" stroke-width=".7"><rect x="750" y="558.800" width="26" height="7.400" rx="1"/><rect x="780" y="558.800" width="31.700" height="7.400" rx="1"/><rect x="815.800" y="558.800" width="31.700" height="7.400" rx="1"/></g>
  <g font-size="2.600" fill="#5a7aa0" text-anchor="middle"><text x="764" y="563.500">♥ いいね！</text><text x="796" y="563.500">コレクションへ</text><text x="831.500" y="563.500">拡大を見る</text></g>
  <text x="754.500" y="583" font-size="3.800" fill="#333">ハオコメント</text><rect x="844" y="579.500" width="4" height="3" fill="#888"/>
  <path d="M754 587.500h97M754 605h97" stroke="#eee" stroke-width=".5"/>
  <text x="755" y="599.800" font-size="2.400" fill="#666">下書き 線画の 大体 いきすぎるバージョ</text><text x="755" y="603.800" font-size="2.400" fill="#666">線画できた</text><text x="755" y="608" font-size="2.200" fill="#aaa">コメント</text><text x="834" y="608" font-size="2.200" fill="#4a8ad8">▲ストックする</text>
  <!-- ads -->
  <defs><linearGradient id="ad1" x1="0" x2="1"><stop offset="0" stop-color="#2a68b0"/><stop offset=".6" stop-color="#123660"/><stop offset="1" stop-color="#080808"/></linearGradient></defs>
  <rect x="853" y="497.700" width="39" height="20.500" fill="url(#ad1)"/>
  <rect x="855" y="499" width="7.500" height="7.500" rx="1.400" fill="#1f5ca8" stroke="#cfe2f8" stroke-width=".4"/><text x="856.200" y="505" font-size="5" fill="#fff" font-weight="bold">iP</text>
  <text x="864" y="502" font-size="2.200" fill="#fff">ibisPaint</text>
  <text x="855" y="513" font-size="7" fill="#9ed0ff" font-weight="bold" textLength="29">ibisPaint</text>
  <rect x="854" y="514.200" width="30" height="3.200" fill="#f2f2f2"/><text x="856" y="516.800" font-size="2.200" fill="#222">■ 今すぐ無料 ダウンロード</text>
  <rect x="853" y="521" width="39" height="30.700" fill="#2b7fd2"/>
  <rect x="853" y="548" width="39" height="3.700" fill="#15253a"/>
  <rect x="856" y="527" width="14.500" height="14.500" rx="3" fill="#1d58a8"/><text x="858.200" y="538.800" font-size="10.500" fill="#fff" font-weight="bold">iP</text>
  <text x="873.500" y="531" font-size="2.600" fill="#fff" font-weight="bold">動画を公開</text>
  <text x="873" y="541.500" font-size="6.400" fill="#cfe8ff" font-weight="bold">ibisPa</text>
  <text x="855" y="551" font-size="2" fill="#ccc">アイビスペイント</text>
  <rect x="753.500" y="611" width="139" height="10" fill="#f3f2e8"/>
  <use href="#adb" x="795.800" y="612" width="54" height="8.600"/>
 </svg>
</div>

<div class="ph" style="left:279px;top:393px;width:138px;height:138px">
 <svg width="138" height="138" viewBox="894 483 138 138">
  <defs><linearGradient id="bp" x1="0" x2="1" y1="0" y2="1"><stop offset="0" stop-color="#8a72e6"/><stop offset="1" stop-color="#3f7ada"/></linearGradient></defs>
  <rect x="894" y="486" width="64" height="48.500" fill="url(#bp)"/>
  <path d="M908 500c2-10 12-16 24-15 12 1 20 8 20 18 0 8-3 16-8 22l-14 6-10-4c-8-6-13-16-12-27z" fill="#eef2f6"/>
  <path d="M922 502c6-4 16-4 22 2l2 16-10 10h-10z" fill="#f6ece6"/>
  <path d="M894 512l14-6 4 6 2 22h-20z" fill="#8c1f24"/><path d="M905 506l14-4 2 8-12 6z" fill="#f4f2f0"/>
  <path d="M914 508c4-2 10-2 12 2l4 24h-14z" fill="#7a1a20"/>
  <path d="M926 528c8-4 18-4 26 0l6 6h-34z" fill="#b0282e"/><path d="M940 524c5-2 12-1 16 3l-2 4h-14z" fill="#f6f0f2"/>
  <path d="M912 492l-6-4M918 488l-2-4M930 486l2-3M944 490l5-3" stroke="#dfe6ee" stroke-width="1"/>
  <path d="M928 508c3-1 6-1 8 1" stroke="#4a8a9a" stroke-width=".8" fill="none"/>
  <g stroke="#1c1c1c" fill="none"><path d="M894 485.200h138M894 535h138M894 583.800h138" stroke-width="1.300"/><path d="M958.800 484v138" stroke-width="1.900"/></g>
  <g font-size="8.400" fill="#111" font-weight="500"><text x="962" y="597.500" textLength="62">すみませんコメント</text><text x="963" y="608.500" textLength="62">できなくて、ここでし</text></g>
 </svg>
</div>

<!-- row 4 -->
<div class="ph" style="left:-1px;top:532px;width:138px;height:136px">
 <svg width="138" height="136" viewBox="614 622 138 136">
  <g fill="none" stroke="#9a9aa6" stroke-width=".6"><path d="M630 646l46-8M651 634v26"/></g>
  <text x="632" y="634" font-size="3" fill="#889">キャラ名</text>
  <text x="632" y="645" font-size="11" fill="#9a9aa6" font-weight="300">荒斗くん</text>
  <g font-size="5.600" fill="#9a9aa6" font-weight="500">
   <text x="631" y="669" textLength="40">見かけは真面目。</text><text x="631" y="679.500" textLength="48">ノリのももちゃん上手!</text><text x="631" y="689" textLength="46">口ぐせの お兄ぎゃは。</text><text x="631" y="700" textLength="52">兎系顔 口 (ワート)</text><text x="631" y="711" textLength="54">らぷが ブリッジ部</text>
  </g>
  <g fill="none" stroke="#b4b4c0" stroke-width=".6"><ellipse cx="650" cy="716" rx="9" ry="3"/><rect x="638" y="720" width="22" height="16" rx="3"/><rect x="663" y="716" width="26" height="24" rx="3"/><rect x="636" y="738" width="16" height="8"/><rect x="654" y="738" width="26" height="14" rx="3"/><rect x="723" y="712" width="30" height="42" rx="5"/></g>
  <g font-size="3.400" fill="#a8a8b4"><text x="641" y="729">♡ 好き</text><text x="640" y="734">プレゼント</text><text x="666" y="722">・気が合う</text><text x="666" y="727">・よく話す</text><text x="666" y="732">・遊びに行く</text><text x="666" y="737">・ずっと</text><text x="656" y="744">「学校でもいい」</text><text x="656" y="749">いつも行く</text><text x="638" y="744">友人</text><text x="726" y="719">内面もかーい！</text><text x="726" y="724">くんを好む。</text><text x="718" y="672">ピアスと</text><text x="718" y="677">チョーカー</text><text x="720" y="687">ダメージ</text><text x="720" y="692">ジーンズ</text><text x="727" y="700">二重</text><text x="725" y="705">切れ長たれ目</text></g>
  <!-- character -->
  <g transform="translate(0 6) translate(703 650) scale(.9) translate(-703 -650)">
  <path d="M684 650c-2-10 4-20 14-23 10-2 20 2 24 12 2 8 0 16-4 22l-14 4-14-4c-4-4-5-8-6-11z" fill="#bcbccc"/>
  <path d="M686 634l-5-4M694 629l-2-6M704 627l2-6M714 631l5-5M720 640l6-2" stroke="#b0b0c2" stroke-width="1.400"/>
  <path d="M690 652c2 8 8 14 14 14 6 0 11-4 13-12l-4-10-16 2z" fill="#f2f0f2"/>
  <path d="M694 640c4-4 10-4 12 2l-4 8-10 2z" fill="#c8c8d6"/>
  <path d="M706 660c4-4 8-4 11 0l-2 4h-8z" fill="#2a2a2a"/><path d="M693 661h6" stroke="#444" stroke-width=".7"/>
  </g>
  <rect x="691" y="670" width="3.400" height="7" fill="#3a3a3a"/>
  <path d="M699 675h12l1 5h-14z" fill="#2c2c34"/>
  <path d="M695 680c6-3 16-3 22 0l4 26-6 2-2-8h-14l-2 8-5-2z" fill="#a9a9bb"/>
  <path d="M692 684c-2 10-2 20 0 28l4-2 2-20zM717 684c4 8 5 18 3 28l-4-2-2-22z" fill="#a2a2b6"/>
  <path d="M697 700h17l-1 42h-6l-1-26-2 26h-6z" fill="#5e6486"/>
  <path d="M698 712h5M708 718h5M699 726h4M708 732h4" stroke="#c4c8dc" stroke-width="1.100"/>
  <path d="M704 700v14" stroke="#333" stroke-width="1"/>
  <path d="M690 746c2-4 8-6 12-4v6h-12zM706 742c4-2 10 0 12 4v3h-12z" fill="#34343c"/>
  <circle cx="733.300" cy="652.500" r="4.200" fill="#dadaea"/><circle cx="733.300" cy="665" r="4.200" fill="#59628e"/>
  <path d="M720 688h22M720 691h18M722 683l16-3" stroke="#b0b0c0" stroke-width=".6"/>
  <circle cx="733" cy="737" r="5" fill="#e8e8f0" stroke="#aaa" stroke-width=".5"/><path d="M728 734c2-4 8-4 10 0" fill="none" stroke="#999" stroke-width=".8"/>
  <path d="M741 734c2-6 10-6 11 0v8h-10z" fill="#5a5f88"/><circle cx="747" cy="738" r="3.400" fill="#f0ecf0"/>
  <path d="M728 746c4 4 12 6 20 4" stroke="#b8b8c8" stroke-width=".6" fill="none"/>
 </svg>
</div>
<div class="ph" style="left:138.300px;top:531px;width:138px;height:138px">
 <svg width="138" height="138" viewBox="0 0 138 138"><use href="#kara" x="0" y="0" width="138" height="138"/></svg>
</div>
<!--/POP-->
</div>

<!-- ===== PINK BLOB ===== -->
<!--BLOB-->
<svg class="abs" style="left:0;top:0;pointer-events:none" width="1200" height="900" viewBox="0 0 1200 900">
 <path d="M282.500 900 L277 825 C275 790 274 740 274 585 C274 562 280 548 296 547 C320 546 345 547 362 546 C390 543 412 537 437 536 C470 534 500 533 531 534 C552 535 570 536 587 540 C610 545 622 550 626 566 C629 585 630 600 630 620 L632 700 L634 758 L760 759 L881 757 L881 700 L881 640 C881 622 888 614 902 612 C920 609 940 608 956 608 C980 608 1000 611 1020 610 C1024 606 1024 600 1025 594 C1027 582 1036 575 1052 573 C1080 570 1100 571 1125 570 C1150 569 1175 568 1200 568 L1200 900 Z" fill="#ff5d7b"/>
</svg>
<!--/BLOB-->

<!-- ===== HANDWRITING ===== -->
<!--HW-->
<svg class="abs" style="left:340px;top:100px;pointer-events:none" width="460" height="290" viewBox="340 100 460 290">
<g fill="none" stroke="#ff5c7c" stroke-linecap="round" stroke-linejoin="round">
<path d="M389 338c2 8 6 14 12 18 14-8 28-14 40-18" stroke-width="4.500"/>
<path d="M745 200C725 186 705 183 690 184C660 186 635 198 615 220C595 242 584 268 584 290C584 315 595 335 615 348C635 361 660 366 680 366C710 366 735 355 752 338C770 320 779 300 779 280C779 255 772 235 762 220C752 207 735 198 715 196C690 194 665 200 645 212C620 228 600 255 595 285C591 310 602 332 622 344C640 355 665 358 685 356C715 353 740 340 754 320C765 304 769 285 767 268C765 250 760 238 752 228" stroke-width="6.500"/>
</g>
<g fill="#ff5c7c" stroke="#ff5c7c" stroke-width="2.6" stroke-linejoin="round" font-weight="300" font-family="'Liberation Sans','Noto Sans CJK JP',sans-serif">
<text font-size="39.5" transform="translate(374.5 153.2) rotate(-6) scale(0.845 1.184) translate(-19.8 14.0)">そ</text>
<text font-size="33.8" transform="translate(404.5 150.2) rotate(-4) scale(0.632 1.582) translate(-16.9 12.4)">し</text>
<text font-size="35.2" transform="translate(433.0 151.0) rotate(-6) scale(0.864 1.158) translate(-17.6 13.4)">た</text>
<text font-size="25.9" transform="translate(465.0 150.2) rotate(-4) scale(0.673 1.486) translate(-12.9 9.3)">ら</text>
<text font-size="33.5" transform="translate(522.2 140.5) rotate(-12) scale(0.862 1.160) translate(-16.8 11.3)">こ</text>
<text font-size="25.5" transform="translate(547.8 147.2) rotate(-8) scale(0.897 1.115) translate(-12.8 9.4)">ん</text>
<text font-size="29.9" transform="translate(579.2 142.8) rotate(-8) scale(0.968 1.033) translate(-14.9 11.2)">な</text>
<text font-size="33.0" transform="translate(616.0 151.8) rotate(-8) scale(0.920 1.087) translate(-16.5 12.1)">ん</text>
<text font-size="34.5" transform="translate(652.8 145.0) rotate(-10) scale(1.097 0.912) translate(-17.3 14.0)">が</text>
<text font-size="32.5" transform="translate(392.5 211.8) rotate(-5) scale(1.028 0.972) translate(-16.2 12.3)">出</text>
<text font-size="23.9" transform="translate(421.8 211.0) rotate(-5) scale(0.832 1.201) translate(-12.0 8.3)">て</text>
<text font-size="17.7" transform="translate(440.5 211.0) rotate(-3) scale(0.700 1.429) translate(-8.9 6.5)">く</text>
<text font-size="31.7" transform="translate(465.2 206.5) rotate(-5) scale(0.818 1.223) translate(-15.8 11.2)">る</text>
<text font-size="29.5" transform="translate(495.2 212.5) rotate(-5) scale(0.979 1.021) translate(-14.8 11.2)">か</text>
<text font-size="18.5" transform="translate(518.5 209.5) rotate(-5) scale(0.833 1.200) translate(-9.2 6.7)">ら</text>
<text font-size="51.3" transform="translate(400.0 269.5) rotate(-8) scale(1.119 0.894) translate(-25.6 19.4)">使</text>
<text font-size="32.6" transform="translate(443.5 266.5) rotate(-8) scale(0.934 1.071) translate(-16.3 11.2)">い</text>
<text font-size="27.7" transform="translate(472.8 262.0) rotate(-8) scale(0.828 1.208) translate(-13.8 10.5)">た</text>
<text font-size="17.8" transform="translate(493.0 251.5) rotate(-14) scale(0.865 1.156) translate(-8.9 6.1)">い</text>
<text font-size="47.6" transform="translate(413.5 319.0) rotate(-9) scale(0.891 1.122) translate(-23.8 16.4)">画</text>
<text font-size="53.7" transform="translate(463.0 313.0) rotate(-9) scale(0.957 1.045) translate(-26.9 20.3)">像</text>
<text font-size="37.4" transform="translate(505.0 308.5) rotate(-9) scale(0.732 1.365) translate(-18.7 14.0)">を</text>
<text font-size="44.8" transform="translate(543.2 302.5) rotate(-10) scale(0.846 1.181) translate(-22.4 17.1)">押</text>
<text font-size="33.7" transform="translate(572.0 300.5) rotate(-8) scale(0.634 1.576) translate(-16.9 12.6)">す</text>
</g></svg>
<!--/HW-->

</div>
</body>
</html>
